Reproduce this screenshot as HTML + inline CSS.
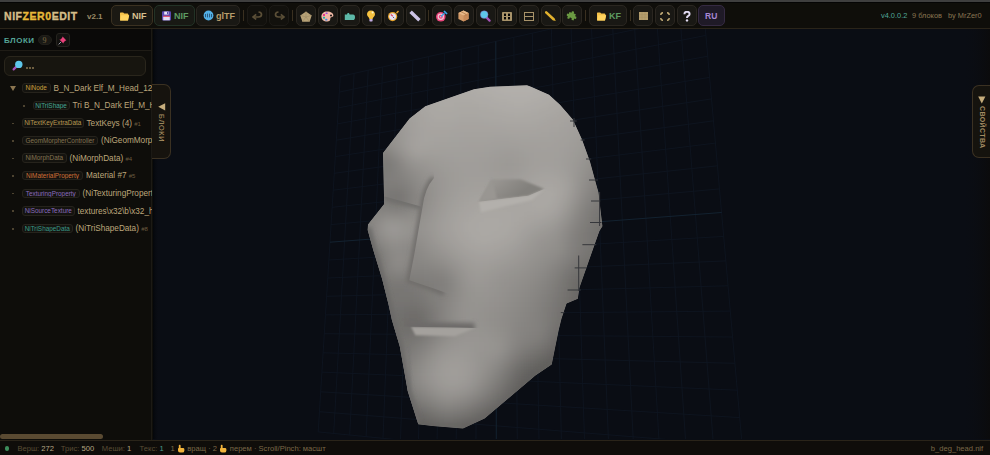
<!DOCTYPE html>
<html><head><meta charset="utf-8">
<style>
*{box-sizing:border-box;margin:0;padding:0}
html,body{width:990px;height:455px;overflow:hidden;background:#0f0e0a;font-family:"Liberation Sans",sans-serif;position:relative}
.a{position:absolute;white-space:nowrap}
#topbar{left:0;top:0;width:990px;height:2px;background:#3f3f3f}
#tb{left:0;top:2px;width:990px;height:27px;background:#0f0e0a;border-top:1px solid #050505;border-bottom:1px solid #2a2419}
.btn{position:absolute;top:5px;height:21px;border:1px solid #2a2620;border-radius:5px;background:#191814}
.sep{position:absolute;top:10px;width:1px;height:11px;background:#3a3020}
.bt{position:absolute;font-weight:bold;font-size:9px;top:6px}
#side{left:0;top:29px;width:152px;height:411px;background:#0e0d0a;border-right:1px solid #1c1a15}
#vp{left:153px;top:29px;width:837px;height:411px;background:#0a0d14;overflow:hidden}
#status{left:0;top:440px;width:990px;height:15px;background:#0f0d0a;border-top:1px solid #2a2419}
.row{position:absolute;left:0;height:17px;width:152px}
.bdg{height:9.5px;border-radius:3px;background:#14130f;border:1px solid #26231c;font-size:6.4px;line-height:8px;text-align:center;overflow:hidden}
.nm{font-size:8.2px;color:#bda77b;line-height:11px}
.hn{color:#6b5c40;font-size:6px}
.dot{position:absolute;width:2px;height:1px;background:#4a4030;top:9px}
</style></head><body>
<div class="a" id="topbar"></div>
<div class="a" id="tb">
  <div class="a" style="left:4px;top:7px;font-size:10.5px;font-weight:bold;letter-spacing:0.55px;color:#d5bd88;-webkit-text-stroke:0.35px #d5bd88">NIF<span style="color:#e8b93a;-webkit-text-stroke:0.35px #e8b93a">ZER0</span>EDIT</div>
  <div class="a" style="left:87px;top:9px;font-size:8px;font-weight:bold;color:#9a8a66">v2.1</div>
</div>
<div class="btn" style="left:111px;width:42px;border-color:#3b3121;background:#1b1913"></div>
<svg class="a" style="left:119px;top:12px" width="11" height="9" viewBox="0 0 11 9"><path d="M1 1.2 Q1 0.6 1.6 0.6 H4.2 L5.2 1.6 H8.6 Q9.2 1.6 9.2 2.2 V2.8 H10 L9 8.2 Q8.9 8.6 8.4 8.6 H1.6 Q1 8.6 1 8 Z" fill="#f5c24a"/><path d="M2.2 3.2 H10.2 L9 8.6 H1.2 Z" fill="#ffd460"/></svg>
<div class="bt" style="left:132px;top:11px;color:#d9c08f">NIF</div>
<div class="btn" style="left:154px;width:41px;border-color:#223226;background:#181914"></div>
<svg class="a" style="left:162px;top:11px" width="9" height="10" viewBox="0 0 9 10"><rect x="0" y="0.3" width="9" height="9.2" rx="1" fill="#5a4ab0"/><rect x="2.2" y="0.6" width="4.4" height="3" fill="#e8e4f4"/><rect x="5" y="1" width="1.2" height="2.2" fill="#5a4ab0"/><rect x="1.2" y="4.8" width="6.6" height="1.1" fill="#f04a5a"/><rect x="1.2" y="5.9" width="6.6" height="3.4" fill="#e4dcf2"/></svg>
<div class="bt" style="left:174px;top:11px;color:#5d9c62">NIF</div>
<div class="btn" style="left:196px;width:44px"></div>
<svg class="a" style="left:203px;top:10px" width="11" height="11" viewBox="0 0 11 11"><circle cx="5.5" cy="5.5" r="4.9" fill="#52b0e6"/><g fill="#2a5a80"><rect x="2" y="4" width="1" height="3.2"/><rect x="4" y="3.6" width="1" height="3.8"/><rect x="6" y="3.6" width="1" height="3.8"/><rect x="8" y="4" width="1" height="3.2"/></g></svg>
<div class="bt" style="left:216px;top:11px;color:#b89e6c">glTF</div>
<div class="sep" style="left:243px"></div>
<div class="btn" style="left:247px;width:20px;border-color:#1c1a16;background:#12110d"></div>
<svg class="a" style="left:252px;top:11px" width="11" height="9" viewBox="0 0 11 9"><path d="M6.5 1 Q9.5 1.3 9.5 3.6 Q9.5 6 6.5 6 H2" fill="none" stroke="#5b4f37" stroke-width="1.7"/><path d="M4.2 3.4 L1 6 L4.2 8.4" fill="none" stroke="#5b4f37" stroke-width="1.7"/></svg>
<div class="btn" style="left:269px;width:20px;border-color:#1c1a16;background:#12110d"></div>
<svg class="a" style="left:274px;top:11px" width="11" height="9" viewBox="0 0 11 9"><path d="M4.5 1 Q1.5 1.3 1.5 3.6 Q1.5 6 4.5 6 H9" fill="none" stroke="#5b4f37" stroke-width="1.7"/><path d="M6.8 3.4 L10 6 L6.8 8.4" fill="none" stroke="#5b4f37" stroke-width="1.7"/></svg>
<div class="sep" style="left:292px"></div>
<div class="btn" style="left:296px;width:20px"></div>
<svg class="a" style="left:300px;top:11px" width="12" height="11" viewBox="0 0 12 11"><path d="M6 0.4 L11.7 4.4 L9.6 10.8 H2.4 L0.3 4.4 Z" fill="#b7a277"/><path d="M6 0.4 L6 6 M11.7 4.4 L6 6 L9.6 10.8 M2.4 10.8 L6 6 L0.3 4.4" stroke="#9a8660" stroke-width="0.5" fill="none"/></svg>
<div class="btn" style="left:318px;width:20px"></div>
<svg class="a" style="left:321px;top:11px" width="13" height="11" viewBox="0 0 13 11"><path d="M6 0.4 C10 0.4 12.4 2.4 12.4 4.4 C12.4 6 10.4 5.6 9.6 6.6 C8.8 7.6 10.2 10.6 6.4 10.6 C2.4 10.6 0.4 8.2 0.4 5.4 C0.4 2.4 2.8 0.4 6 0.4 Z" fill="#f2b9a6"/><circle cx="10" cy="4.4" r="1" fill="#111"/><rect x="2" y="3" width="2" height="2" fill="#e83a8a"/><rect x="4.6" y="1.4" width="2" height="1.6" rx="0.6" fill="#9a4ae0"/><rect x="2" y="5.8" width="2" height="1.8" fill="#2ab0a0"/><rect x="4.2" y="7.8" width="2.2" height="1.8" rx="0.6" fill="#3a8ae8"/></svg>
<div class="btn" style="left:340px;width:20px"></div>
<svg class="a" style="left:344px;top:12px" width="12" height="9" viewBox="0 0 12 9"><path d="M0.8 2.4 H3 L3.6 1 H5 L5.6 2.4 H9 Q11 2.4 11 5.2 Q11 8 9 8 H0.8 Z" fill="#5db9a8"/></svg>
<div class="btn" style="left:362px;width:20px"></div>
<svg class="a" style="left:366px;top:10px" width="10" height="12" viewBox="0 0 10 12"><path d="M5 0.4 C7.8 0.4 9 2.4 9 4.2 C9 6.4 6.8 7.2 6.6 9 H3.4 C3.2 7.2 1 6.4 1 4.2 C1 2.4 2.2 0.4 5 0.4 Z" fill="#f6c240"/><circle cx="6.6" cy="2.6" r="1" fill="#fff6d0"/><rect x="3.4" y="9" width="3.2" height="2.4" rx="0.6" fill="#c3ace2"/></svg>
<div class="btn" style="left:384px;width:20px"></div>
<svg class="a" style="left:387px;top:10px" width="13" height="12" viewBox="0 0 13 12"><circle cx="5.6" cy="6.6" r="4.6" fill="#e9a62e"/><circle cx="5.6" cy="6.6" r="3.4" fill="#e6e2f2"/><path d="M9 2.4 L11 0.6 L12 1.6 L10.2 3.4 Z" fill="#e9a62e"/><path d="M3.8 4.6 L5.8 6.2 L4.8 5.2 Z" fill="#e04a6a" stroke="#e04a6a" stroke-width="1.2"/><path d="M6 7 L7.2 8" stroke="#555" stroke-width="1"/></svg>
<div class="btn" style="left:406px;width:20px"></div>
<svg class="a" style="left:409px;top:10px" width="12" height="12" viewBox="0 0 12 12"><path d="M0.4 3 L2.8 0.6 L11.6 9 L9.2 11.4 Z" fill="#cbc2e4"/></svg>
<div class="sep" style="left:428px"></div>
<div class="btn" style="left:432px;width:20px"></div>
<svg class="a" style="left:436px;top:10px" width="12" height="12" viewBox="0 0 12 12"><circle cx="4.8" cy="6.8" r="4.8" fill="#e8457a"/><circle cx="4.8" cy="6.8" r="3.2" fill="#f2c8d6"/><circle cx="4.8" cy="6.8" r="2" fill="#e8457a"/><circle cx="4.8" cy="6.8" r="0.8" fill="#f2c8d6"/><path d="M5 6.6 L8.4 3.2" stroke="#3aa6e8" stroke-width="1.4"/><path d="M7.4 1.6 L8.6 0.4 L11.6 3.4 L10.4 4.6 Z" fill="#3aa6e8"/></svg>
<div class="btn" style="left:454px;width:20px"></div>
<svg class="a" style="left:458px;top:10px" width="11" height="12" viewBox="0 0 11 12"><path d="M5.5 0.4 L10.6 3 V9 L5.5 11.6 L0.4 9 V3 Z" fill="#d69c68"/><path d="M0.4 3 L5.5 5.6 L10.6 3 L5.5 0.4 Z" fill="#e8b888"/><path d="M5.5 5.6 V11.6 L10.6 9 V3 Z" fill="#c88a58"/><path d="M3 1.7 L8 4.3 V6" stroke="#b07848" stroke-width="0.8" fill="none"/></svg>
<div class="btn" style="left:476px;width:20px"></div>
<svg class="a" style="left:480px;top:10px" width="11" height="12" viewBox="0 0 11 12"><path d="M6.4 7.4 L9.6 10.6" stroke="#a752b8" stroke-width="2.2" stroke-linecap="round"/><circle cx="4.2" cy="4.6" r="3.9" fill="#5ec6ea"/><circle cx="4.2" cy="4.6" r="3.9" fill="none" stroke="#8a4aa8" stroke-width="0.4"/></svg>
<div class="btn" style="left:497px;width:20px"></div>
<svg class="a" style="left:502px;top:12px" width="10" height="9" viewBox="0 0 10 9"><rect x="0" y="0" width="10" height="9" rx="0.8" fill="#a8936a"/><rect x="2" y="1.6" width="2" height="2.4" fill="#050505"/><rect x="6" y="1.6" width="2" height="2.4" fill="#050505"/><rect x="2" y="5" width="2" height="2.4" fill="#050505"/><rect x="6" y="5" width="2" height="2.4" fill="#050505"/></svg>
<div class="btn" style="left:519px;width:20px"></div>
<svg class="a" style="left:524px;top:12px" width="10" height="9" viewBox="0 0 10 9"><rect x="0.5" y="0.5" width="9" height="8" fill="none" stroke="#a8936a" stroke-width="1"/><path d="M0.5 4.5 H9.5" stroke="#a8936a" stroke-width="1"/></svg>
<div class="btn" style="left:541px;width:20px"></div>
<svg class="a" style="left:545px;top:11px" width="11" height="10" viewBox="0 0 11 10"><path d="M1.2 1.4 L8.6 8.2" stroke="#e1b12e" stroke-width="2.6" stroke-linecap="round"/><path d="M8 7.6 L10.4 9.6" stroke="#e1b12e" stroke-width="1.2"/></svg>
<div class="btn" style="left:562px;width:20px"></div>
<svg class="a" style="left:566px;top:10px" width="12" height="12" viewBox="0 0 12 12"><g transform="rotate(20 6 6)"><path d="M2.2 3 H4.4 Q4 1.2 5.6 1.2 Q7.2 1.2 6.8 3 H9 V5.2 Q10.8 4.8 10.8 6.4 Q10.8 8 9 7.6 V9.8 H6.8 Q7.2 8 5.6 8 Q4 8 4.4 9.8 H2.2 V7.6 Q0.6 8 0.6 6.4 Q0.6 4.8 2.2 5.2 Z" fill="#6a9a42"/></g></svg>
<div class="sep" style="left:585px"></div>
<div class="btn" style="left:589px;width:38px"></div>
<svg class="a" style="left:596px;top:12px" width="11" height="9" viewBox="0 0 11 9"><path d="M1 1.2 Q1 0.6 1.6 0.6 H4.2 L5.2 1.6 H8.6 Q9.2 1.6 9.2 2.2 V2.8 H10 L9 8.2 Q8.9 8.6 8.4 8.6 H1.6 Q1 8.6 1 8 Z" fill="#f5c24a"/><path d="M2.2 3.2 H10.2 L9 8.6 H1.2 Z" fill="#ffd460"/></svg>
<div class="bt" style="left:609px;top:11px;color:#5d9c62">KF</div>
<div class="sep" style="left:630px"></div>
<div class="btn" style="left:633px;width:20px"></div>
<svg class="a" style="left:639px;top:12px" width="9" height="8" viewBox="0 0 9 8"><rect x="0" y="0" width="9" height="8" fill="#b59e6e"/><path d="M3 0 V8 M6 0 V8 M0 2.7 H9 M0 5.3 H9" stroke="#a08a5e" stroke-width="0.4"/></svg>
<div class="btn" style="left:655px;width:20px"></div>
<svg class="a" style="left:660px;top:12px" width="10" height="9" viewBox="0 0 10 9"><path d="M0.8 3 Q0.8 0.8 3 0.8 M7 0.8 Q9.2 0.8 9.2 3 M9.2 6 Q9.2 8.2 7 8.2 M3 8.2 Q0.8 8.2 0.8 6" stroke="#c8b07a" stroke-width="1.4" fill="none"/></svg>
<div class="btn" style="left:677px;width:20px"></div>
<svg class="a" style="left:683px;top:11px" width="8" height="11" viewBox="0 0 8 11"><path d="M1.4 3.2 Q1.4 0.8 4 0.8 Q6.6 0.8 6.6 3 Q6.6 4.4 5 5.2 Q4 5.8 4 7" stroke="#e2dbf2" stroke-width="2" fill="none"/><circle cx="4" cy="9.4" r="1.2" fill="#e2dbf2"/></svg>
<div class="btn" style="left:698px;width:27px;background:#1f1a27;border-color:#352a42"></div>
<div class="bt" style="left:705px;top:11px;color:#a687d4;font-size:8.5px">RU</div>
<div class="a" style="left:881px;top:11px;font-size:7.4px;color:#4fa69a">v4.0.0.2</div>
<div class="a" style="left:912px;top:11px;font-size:7.4px;color:#8a7652">9 блоков</div>
<div class="a" style="left:948px;top:11px;font-size:7.4px;color:#8a7652">by MrZer0</div>
<div class="a" id="side"></div>
<div class="a" style="left:0;top:29px;width:151px;height:21px;background:#0a0908"></div>
<div class="a" style="left:4px;top:36px;font-size:8px;font-weight:bold;letter-spacing:0.5px;color:#56a598">БЛОКИ</div>
<div class="a" style="left:38px;top:34.5px;width:14px;height:10.5px;border-radius:5px;background:#1a1915;border:1px solid #211f1a"></div>
<div class="a" style="left:42.5px;top:35.5px;font-size:8px;font-family:'Liberation Serif',serif;color:#7e6a44">9</div>
<div class="a" style="left:56px;top:33px;width:14px;height:14px;border-radius:3px;background:#131210;border:1px solid #25231e"></div>
<svg class="a" style="left:58px;top:36px" width="9" height="9" viewBox="0 0 9 9"><path d="M4.6 0.6 L8.4 4.4 L7.2 4.8 L5.6 6.4 L5.4 7.6 L1.4 3.6 L2.6 3.4 L4.2 1.8 Z" fill="#e8407a"/><path d="M3 6 L0.6 8.4" stroke="#9a9aa8" stroke-width="1"/></svg>
<div class="a" style="left:0;top:50px;width:152px;height:1px;background:#1f1c16"></div>
<div class="a" style="left:4px;top:56px;width:142px;height:20px;border-radius:6px;background:#17150f;border:1px solid #2a261c"></div>
<svg class="a" style="left:12px;top:60px" width="11" height="11" viewBox="0 0 11 11"><path d="M5 6 L1.6 9.4" stroke="#a550b8" stroke-width="2.2" stroke-linecap="round"/><circle cx="6.8" cy="4.4" r="3.7" fill="#5ec6ea"/></svg>
<div class="a" style="left:26px;top:67px;width:8px;height:2px;background:repeating-linear-gradient(90deg,#6e5e40 0 1.6px,transparent 1.6px 3px)"></div>
<div class="a" style="left:0;top:80px;width:152px;height:160px;overflow:hidden">
<svg class="a" style="left:10px;top:5.5px" width="6" height="5" viewBox="0 0 6 5"><path d="M0 0 H6 L3 5 Z" fill="#8a7550"/></svg>
<div class="a bdg" style="left:22px;top:3.3px;width:28.5px;color:#c9a03e">NiNode</div>
<div class="a nm" style="left:53.5px;top:2.7px">B_N_Dark Elf_M_Head_12 <span class=hn>#0</span></div>
<div class="a" style="left:23.0px;top:25.0px;width:1.5px;height:1.5px;background:#4d4330"></div>
<div class="a bdg" style="left:32.5px;top:20.8px;width:37px;color:#45a693">NiTriShape</div>
<div class="a nm" style="left:72.5px;top:20.2px">Tri B_N_Dark Elf_M_Head</div>
<div class="a" style="left:12.0px;top:42.5px;width:1.5px;height:1.5px;background:#4d4330"></div>
<div class="a bdg" style="left:22px;top:38.3px;width:61.5px;color:#b89a52">NiTextKeyExtraData</div>
<div class="a nm" style="left:86.5px;top:37.7px">TextKeys (4) <span class=hn>#1</span></div>
<div class="a" style="left:12.0px;top:60.0px;width:1.5px;height:1.5px;background:#4d4330"></div>
<div class="a bdg" style="left:22px;top:55.8px;width:76px;color:#857352">GeomMorpherController</div>
<div class="a nm" style="left:101px;top:55.2px">(NiGeomMorpherController)</div>
<div class="a" style="left:12.0px;top:77.5px;width:1.5px;height:1.5px;background:#4d4330"></div>
<div class="a bdg" style="left:22px;top:73.3px;width:44.5px;color:#857352">NiMorphData</div>
<div class="a nm" style="left:69.5px;top:72.7px">(NiMorphData) <span class=hn>#4</span></div>
<div class="a" style="left:12.0px;top:95.1px;width:1.5px;height:1.5px;background:#4d4330"></div>
<div class="a bdg" style="left:22px;top:90.9px;width:61px;color:#cf6f38">NiMaterialProperty</div>
<div class="a nm" style="left:86px;top:90.3px">Material #7 <span class=hn>#5</span></div>
<div class="a" style="left:12.0px;top:112.7px;width:1.5px;height:1.5px;background:#4d4330"></div>
<div class="a bdg" style="left:22px;top:108.5px;width:57.5px;color:#8a6bbf">TexturingProperty</div>
<div class="a nm" style="left:82.5px;top:107.9px">(NiTexturingProperty)</div>
<div class="a" style="left:12.0px;top:130.3px;width:1.5px;height:1.5px;background:#4d4330"></div>
<div class="a bdg" style="left:22px;top:126.1px;width:52.5px;color:#8a6bbf">NiSourceTexture</div>
<div class="a nm" style="left:77.5px;top:125.5px">textures\x32\b\x32_head.dds</div>
<div class="a" style="left:12.0px;top:148.0px;width:1.5px;height:1.5px;background:#4d4330"></div>
<div class="a bdg" style="left:22px;top:143.8px;width:50.5px;color:#3a9a88">NiTriShapeData</div>
<div class="a nm" style="left:75.5px;top:143.2px">(NiTriShapeData) <span class=hn>#8</span></div>
</div><div class="a" id="vp"></div>
<svg class="a" style="left:0;top:0" width="990" height="455" viewBox="0 0 990 455">
<defs><clipPath id="fc"><polygon points="383,153 409.6,118.4 425.3,106.3 474,89.2 490,86.7 527,85.2 531,86.7 549,94.7 560,104.8 572.8,119.6 582,139.4 590,161.8 596.5,185.5 598.4,192.3 602.4,226.2 599.4,230.9 579.3,288 577.8,298.7 566.5,303.5 561.5,318.5 558.5,330.8 551.7,364.6 535.4,375.4 484.6,418.5 463,428.5 432.8,426 418.3,424.2 407.7,391 406.4,383.3 399.8,346.4 391.9,320 388.6,304.7 382,278.4 373.2,249.8 367.7,230 368,224.6 384.2,204"/></clipPath>
<filter id="bl3" filterUnits="userSpaceOnUse" x="150" y="28" width="840" height="412"><feGaussianBlur stdDeviation="3"/></filter>
<filter id="bl1" filterUnits="userSpaceOnUse" x="150" y="28" width="840" height="412"><feGaussianBlur stdDeviation="1.2"/></filter>
<filter id="bl2" filterUnits="userSpaceOnUse" x="150" y="28" width="840" height="412"><feGaussianBlur stdDeviation="2"/></filter>
<clipPath id="vpc"><rect x="153" y="29" width="837" height="410"/></clipPath>
<linearGradient id="lsh" x1="0" x2="1"><stop offset="0" stop-color="#04060a"/><stop offset="1" stop-color="#0a0d14" stop-opacity="0"/></linearGradient>
<linearGradient id="rsh" x1="0" x2="1"><stop offset="0" stop-color="#0a0d14" stop-opacity="0"/><stop offset="1" stop-color="#0b0b0c"/></linearGradient>
</defs>
<g clip-path="url(#vpc)">
<rect x="153" y="29" width="837" height="410" fill="#0a0d14"/>
<rect x="153" y="29" width="6" height="410" fill="url(#lsh)"/>
<rect x="962" y="29" width="28" height="410" fill="url(#rsh)"/>
<path d="M340.3 76.5L318.2 431.9M340.3 76.5L702.3 -5.2M354.1 73.4L333.7 433.4M339.3 92.1L704.1 14.9M368.2 70.2L349.7 435.0M338.3 107.9L705.9 35.4M382.7 66.9L366.1 436.6M337.3 123.9L707.8 56.2M397.6 63.5L383.0 438.3M336.3 140.2L709.6 77.3M412.9 60.1L400.5 440.0M335.3 156.6L711.5 98.9M428.6 56.6L418.4 441.8M334.3 173.3L713.5 120.8M444.7 52.9L437.0 443.6M333.2 190.2L715.4 143.1M461.3 49.2L456.1 445.5M332.2 207.3L717.5 165.8M478.3 45.4L475.9 447.5M331.1 224.6L719.5 188.9M513.8 37.4L517.4 451.6M328.9 260.0L723.7 236.4M532.3 33.2L539.2 453.7M327.8 278.0L725.9 260.9M551.4 28.9L561.8 456.0M326.6 296.3L728.1 285.8M571.0 24.5L585.1 458.3M325.5 314.9L730.3 311.1M591.2 19.9L609.3 460.7M324.3 333.7L732.6 337.0M612.1 15.2L634.4 463.2M323.1 352.8L734.9 363.3M633.6 10.3L660.5 465.7M321.9 372.1L737.3 390.2M655.8 5.3L687.5 468.4M320.7 391.8L739.7 417.6M678.7 0.2L715.5 471.2M319.4 411.7L742.2 445.5M702.3 -5.2L744.7 474.1M318.2 431.9L744.7 474.1" stroke="#0e1520" stroke-width="0.9" fill="none"/><path d="M495.8 41.4L496.3 449.5M330.0 242.2L721.6 212.5" stroke="#132230" stroke-width="1" fill="none"/>
<g clip-path="url(#fc)">
<polygon points="383,153 409.6,118.4 425.3,106.3 474,89.2 490,86.7 527,85.2 531,86.7 549,94.7 560,104.8 572.8,119.6 582,139.4 590,161.8 596.5,185.5 598.4,192.3 602.4,226.2 599.4,230.9 579.3,288 577.8,298.7 566.5,303.5 561.5,318.5 558.5,330.8 551.7,364.6 535.4,375.4 484.6,418.5 463,428.5 432.8,426 418.3,424.2 407.7,391 406.4,383.3 399.8,346.4 391.9,320 388.6,304.7 382,278.4 373.2,249.8 367.7,230 368,224.6 384.2,204" fill="#9a9793"/>
<g filter="url(#bl3)"><path fill="#b0ada9" d="M469 82h5v5h-5zM474 82h5v5h-5zM484 87h5v5h-5zM544 87h5v5h-5zM494 92h5v5h-5zM499 92h5v5h-5zM534 92h5v5h-5zM509 97h5v5h-5zM514 97h5v5h-5zM519 97h5v5h-5zM524 97h5v5h-5z"/><path fill="#b1aeaa" d="M479 82h5v5h-5zM484 82h5v5h-5zM494 87h5v5h-5zM534 87h5v5h-5zM539 87h5v5h-5zM504 92h5v5h-5zM509 92h5v5h-5zM514 92h5v5h-5zM519 92h5v5h-5zM524 92h5v5h-5zM529 92h5v5h-5z"/><path fill="#b2afab" d="M489 82h5v5h-5zM494 82h5v5h-5zM504 87h5v5h-5zM509 87h5v5h-5zM514 87h5v5h-5zM519 87h5v5h-5zM524 87h5v5h-5zM529 87h5v5h-5z"/><path fill="#b3b0ac" d="M499 82h5v5h-5zM504 82h5v5h-5zM509 82h5v5h-5zM524 82h5v5h-5zM529 82h5v5h-5z"/><path fill="#b4b1ac" d="M514 82h5v5h-5zM519 82h5v5h-5z"/><path fill="#b3afab" d="M534 82h5v5h-5z"/><path fill="#aeaba7" d="M454 87h5v5h-5zM459 87h5v5h-5zM474 92h5v5h-5zM479 92h5v5h-5zM549 92h5v5h-5zM489 97h5v5h-5zM539 97h5v5h-5zM499 102h5v5h-5zM504 102h5v5h-5zM509 102h5v5h-5zM524 102h5v5h-5zM529 102h5v5h-5z"/><path fill="#aeaca8" d="M464 87h5v5h-5z"/><path fill="#afaca8" d="M469 87h5v5h-5zM474 87h5v5h-5zM549 87h5v5h-5zM484 92h5v5h-5zM489 92h5v5h-5zM539 92h5v5h-5zM544 92h5v5h-5zM494 97h5v5h-5zM499 97h5v5h-5zM504 97h5v5h-5zM529 97h5v5h-5zM534 97h5v5h-5zM514 102h5v5h-5zM519 102h5v5h-5z"/><path fill="#b0ada8" d="M479 87h5v5h-5z"/><path fill="#b1aea9" d="M489 87h5v5h-5z"/><path fill="#b2afaa" d="M499 87h5v5h-5z"/><path fill="#adaaa6" d="M439 92h5v5h-5zM444 92h5v5h-5zM449 92h5v5h-5zM454 92h5v5h-5zM459 92h5v5h-5zM464 92h5v5h-5zM469 92h5v5h-5zM554 92h5v5h-5zM474 97h5v5h-5zM479 97h5v5h-5zM544 97h5v5h-5zM549 97h5v5h-5zM489 102h5v5h-5zM494 102h5v5h-5zM534 102h5v5h-5zM539 102h5v5h-5zM504 107h5v5h-5zM509 107h5v5h-5zM514 107h5v5h-5zM519 107h5v5h-5zM524 107h5v5h-5z"/><path fill="#aba8a4" d="M429 97h5v5h-5zM559 97h5v5h-5zM434 102h5v5h-5zM454 102h5v5h-5zM459 102h5v5h-5zM464 102h5v5h-5zM469 102h5v5h-5zM474 102h5v5h-5zM549 102h5v5h-5zM439 107h5v5h-5zM444 107h5v5h-5zM449 107h5v5h-5zM479 107h5v5h-5zM484 107h5v5h-5zM539 107h5v5h-5zM544 107h5v5h-5zM499 112h5v5h-5zM504 112h5v5h-5zM524 112h5v5h-5zM529 112h5v5h-5zM484 217h5v5h-5zM489 217h5v5h-5zM494 217h5v5h-5zM479 222h5v5h-5zM484 222h5v5h-5zM489 222h5v5h-5zM494 222h5v5h-5zM479 227h5v5h-5zM484 227h5v5h-5zM489 227h5v5h-5zM494 227h5v5h-5zM479 232h5v5h-5zM484 232h5v5h-5z"/><path fill="#aca9a5" d="M434 97h5v5h-5zM439 97h5v5h-5zM444 97h5v5h-5zM449 97h5v5h-5zM454 97h5v5h-5zM459 97h5v5h-5zM464 97h5v5h-5zM469 97h5v5h-5zM554 97h5v5h-5zM444 102h5v5h-5zM449 102h5v5h-5zM479 102h5v5h-5zM484 102h5v5h-5zM544 102h5v5h-5zM494 107h5v5h-5zM499 107h5v5h-5zM534 107h5v5h-5zM514 112h5v5h-5z"/><path fill="#adaaa7" d="M484 97h5v5h-5z"/><path fill="#a8a5a1" d="M419 102h5v5h-5zM424 112h5v5h-5zM554 112h5v5h-5zM459 117h5v5h-5zM464 117h5v5h-5zM469 117h5v5h-5zM474 117h5v5h-5zM544 117h5v5h-5zM429 122h5v5h-5zM434 122h5v5h-5zM439 122h5v5h-5zM444 122h5v5h-5zM494 122h5v5h-5zM499 122h5v5h-5zM504 122h5v5h-5zM509 122h5v5h-5zM529 122h5v5h-5zM534 122h5v5h-5zM539 182h5v5h-5zM544 182h5v5h-5zM549 182h5v5h-5zM554 187h5v5h-5zM524 192h5v5h-5zM554 192h5v5h-5zM519 197h5v5h-5zM489 202h5v5h-5zM494 202h5v5h-5zM499 202h5v5h-5zM504 202h5v5h-5zM509 202h5v5h-5zM474 207h5v5h-5zM544 207h5v5h-5zM524 212h5v5h-5zM529 212h5v5h-5zM464 217h5v5h-5zM519 217h5v5h-5zM514 222h5v5h-5zM464 232h5v5h-5zM499 237h5v5h-5zM474 242h5v5h-5zM479 242h5v5h-5zM484 242h5v5h-5zM489 242h5v5h-5z"/><path fill="#a9a6a3" d="M424 102h5v5h-5zM499 117h5v5h-5zM544 187h5v5h-5zM534 192h5v5h-5zM549 197h5v5h-5zM529 202h5v5h-5zM509 212h5v5h-5zM509 217h5v5h-5zM469 232h5v5h-5zM474 237h5v5h-5zM489 237h5v5h-5z"/><path fill="#aaa7a4" d="M429 102h5v5h-5zM554 102h5v5h-5zM479 217h5v5h-5zM499 217h5v5h-5zM474 222h5v5h-5z"/><path fill="#aba9a5" d="M439 102h5v5h-5zM519 112h5v5h-5z"/><path fill="#aaa7a3" d="M559 102h5v5h-5zM429 107h5v5h-5zM459 107h5v5h-5zM464 107h5v5h-5zM469 107h5v5h-5zM474 107h5v5h-5zM549 107h5v5h-5zM434 112h5v5h-5zM439 112h5v5h-5zM444 112h5v5h-5zM449 112h5v5h-5zM484 112h5v5h-5zM489 112h5v5h-5zM539 112h5v5h-5zM504 117h5v5h-5zM509 117h5v5h-5zM514 117h5v5h-5zM519 117h5v5h-5zM524 117h5v5h-5zM539 192h5v5h-5zM544 192h5v5h-5zM549 192h5v5h-5zM534 197h5v5h-5zM539 197h5v5h-5zM544 197h5v5h-5zM534 202h5v5h-5zM539 202h5v5h-5zM479 212h5v5h-5zM484 212h5v5h-5zM489 212h5v5h-5zM494 212h5v5h-5zM499 212h5v5h-5zM504 212h5v5h-5zM474 217h5v5h-5zM504 217h5v5h-5zM469 222h5v5h-5zM504 222h5v5h-5zM469 227h5v5h-5zM499 227h5v5h-5zM474 232h5v5h-5zM494 232h5v5h-5zM479 237h5v5h-5zM484 237h5v5h-5z"/><path fill="#a9a6a2" d="M564 102h5v5h-5zM424 107h5v5h-5zM554 107h5v5h-5zM429 112h5v5h-5zM459 112h5v5h-5zM464 112h5v5h-5zM469 112h5v5h-5zM474 112h5v5h-5zM544 112h5v5h-5zM434 117h5v5h-5zM439 117h5v5h-5zM444 117h5v5h-5zM449 117h5v5h-5zM489 117h5v5h-5zM494 117h5v5h-5zM534 117h5v5h-5zM539 187h5v5h-5zM549 187h5v5h-5zM524 197h5v5h-5zM529 197h5v5h-5zM519 202h5v5h-5zM524 202h5v5h-5zM484 207h5v5h-5zM489 207h5v5h-5zM494 207h5v5h-5zM499 207h5v5h-5zM504 207h5v5h-5zM509 207h5v5h-5zM514 207h5v5h-5zM519 207h5v5h-5zM524 207h5v5h-5zM529 207h5v5h-5zM534 207h5v5h-5zM539 207h5v5h-5zM474 212h5v5h-5zM514 212h5v5h-5zM519 212h5v5h-5zM469 217h5v5h-5zM514 217h5v5h-5zM464 222h5v5h-5zM509 222h5v5h-5zM464 227h5v5h-5zM504 232h5v5h-5zM494 237h5v5h-5z"/><path fill="#a4a19d" d="M409 107h5v5h-5zM414 122h5v5h-5zM414 127h5v5h-5zM559 127h5v5h-5zM414 132h5v5h-5zM554 132h5v5h-5zM414 137h5v5h-5zM464 137h5v5h-5zM469 137h5v5h-5zM474 137h5v5h-5zM479 137h5v5h-5zM484 137h5v5h-5zM514 137h5v5h-5zM519 137h5v5h-5zM524 137h5v5h-5zM529 137h5v5h-5zM534 137h5v5h-5zM539 137h5v5h-5zM544 137h5v5h-5zM439 142h5v5h-5zM444 142h5v5h-5zM414 147h5v5h-5zM419 147h5v5h-5zM534 172h5v5h-5zM554 172h5v5h-5zM559 177h5v5h-5zM519 182h5v5h-5zM509 187h5v5h-5zM474 192h5v5h-5zM464 197h5v5h-5zM459 202h5v5h-5zM449 222h5v5h-5zM529 222h5v5h-5zM449 227h5v5h-5zM454 237h5v5h-5zM514 237h5v5h-5zM459 242h5v5h-5zM464 247h5v5h-5zM499 247h5v5h-5zM474 252h5v5h-5zM489 252h5v5h-5z"/><path fill="#a6a39f" d="M414 107h5v5h-5zM419 117h5v5h-5zM559 117h5v5h-5zM419 122h5v5h-5zM549 122h5v5h-5zM554 122h5v5h-5zM459 127h5v5h-5zM464 127h5v5h-5zM469 127h5v5h-5zM474 127h5v5h-5zM479 127h5v5h-5zM484 127h5v5h-5zM489 127h5v5h-5zM539 127h5v5h-5zM544 127h5v5h-5zM424 132h5v5h-5zM429 132h5v5h-5zM434 132h5v5h-5zM439 132h5v5h-5zM444 132h5v5h-5zM424 137h5v5h-5zM539 177h5v5h-5zM554 177h5v5h-5zM529 182h5v5h-5zM514 192h5v5h-5zM559 192h5v5h-5zM479 197h5v5h-5zM484 197h5v5h-5zM469 202h5v5h-5zM554 202h5v5h-5zM459 212h5v5h-5zM544 212h5v5h-5zM529 217h5v5h-5zM454 222h5v5h-5zM454 227h5v5h-5zM459 237h5v5h-5zM509 237h5v5h-5zM464 242h5v5h-5zM474 247h5v5h-5zM489 247h5v5h-5z"/><path fill="#a7a5a1" d="M419 107h5v5h-5zM564 107h5v5h-5zM424 117h5v5h-5zM449 122h5v5h-5zM489 122h5v5h-5zM514 197h5v5h-5zM554 197h5v5h-5zM484 202h5v5h-5z"/><path fill="#aaa8a4" d="M434 107h5v5h-5zM454 107h5v5h-5zM494 112h5v5h-5zM534 112h5v5h-5zM499 222h5v5h-5zM474 227h5v5h-5zM489 232h5v5h-5z"/><path fill="#aba8a5" d="M489 107h5v5h-5zM509 112h5v5h-5z"/><path fill="#aca9a6" d="M529 107h5v5h-5z"/><path fill="#a8a5a2" d="M559 107h5v5h-5zM429 117h5v5h-5zM479 117h5v5h-5zM514 122h5v5h-5zM519 122h5v5h-5zM524 122h5v5h-5zM534 187h5v5h-5zM514 202h5v5h-5zM469 212h5v5h-5zM509 227h5v5h-5z"/><path fill="#a6a4a0" d="M569 107h5v5h-5zM449 127h5v5h-5zM504 127h5v5h-5zM534 127h5v5h-5zM544 177h5v5h-5zM499 197h5v5h-5zM479 247h5v5h-5z"/><path fill="#a19e9b" d="M404 112h5v5h-5zM574 127h5v5h-5zM409 132h5v5h-5zM489 147h5v5h-5zM559 147h5v5h-5zM444 152h5v5h-5zM449 152h5v5h-5zM474 152h5v5h-5zM529 152h5v5h-5zM554 157h5v5h-5zM559 167h5v5h-5zM454 197h5v5h-5zM539 222h5v5h-5zM444 232h5v5h-5zM524 232h5v5h-5zM509 247h5v5h-5zM489 257h5v5h-5z"/><path fill="#a3a09d" d="M409 112h5v5h-5zM569 122h5v5h-5zM564 127h5v5h-5zM559 132h5v5h-5zM494 137h5v5h-5zM499 137h5v5h-5zM504 137h5v5h-5zM459 142h5v5h-5zM464 142h5v5h-5zM539 167h5v5h-5zM549 167h5v5h-5zM524 177h5v5h-5zM484 187h5v5h-5zM499 187h5v5h-5zM504 187h5v5h-5zM524 227h5v5h-5zM449 232h5v5h-5zM519 232h5v5h-5z"/><path fill="#a5a29e" d="M414 112h5v5h-5zM564 117h5v5h-5zM559 122h5v5h-5zM554 127h5v5h-5zM464 132h5v5h-5zM469 132h5v5h-5zM474 132h5v5h-5zM479 132h5v5h-5zM484 132h5v5h-5zM489 132h5v5h-5zM494 132h5v5h-5zM499 132h5v5h-5zM504 132h5v5h-5zM509 132h5v5h-5zM539 132h5v5h-5zM544 132h5v5h-5zM439 137h5v5h-5zM444 137h5v5h-5zM419 142h5v5h-5zM424 142h5v5h-5zM429 142h5v5h-5zM539 172h5v5h-5zM544 172h5v5h-5zM549 172h5v5h-5zM524 182h5v5h-5zM484 192h5v5h-5zM489 192h5v5h-5zM494 192h5v5h-5zM499 192h5v5h-5zM504 192h5v5h-5zM469 197h5v5h-5zM464 202h5v5h-5zM459 207h5v5h-5zM519 227h5v5h-5zM454 232h5v5h-5zM504 242h5v5h-5zM494 247h5v5h-5z"/><path fill="#a7a4a0" d="M419 112h5v5h-5zM559 112h5v5h-5zM554 117h5v5h-5zM424 122h5v5h-5zM459 122h5v5h-5zM464 122h5v5h-5zM469 122h5v5h-5zM474 122h5v5h-5zM479 122h5v5h-5zM544 122h5v5h-5zM429 127h5v5h-5zM434 127h5v5h-5zM439 127h5v5h-5zM444 127h5v5h-5zM509 127h5v5h-5zM514 127h5v5h-5zM519 127h5v5h-5zM524 127h5v5h-5zM529 127h5v5h-5zM534 182h5v5h-5zM554 182h5v5h-5zM519 192h5v5h-5zM504 197h5v5h-5zM509 197h5v5h-5zM474 202h5v5h-5zM479 202h5v5h-5zM469 207h5v5h-5zM549 207h5v5h-5zM539 212h5v5h-5zM459 217h5v5h-5zM524 217h5v5h-5zM519 222h5v5h-5zM514 227h5v5h-5zM459 232h5v5h-5zM504 237h5v5h-5zM469 242h5v5h-5zM494 242h5v5h-5z"/><path fill="#a9a7a3" d="M454 112h5v5h-5zM479 112h5v5h-5zM529 117h5v5h-5zM544 202h5v5h-5zM504 227h5v5h-5zM499 232h5v5h-5z"/><path fill="#a8a6a2" d="M549 112h5v5h-5zM454 117h5v5h-5zM484 117h5v5h-5zM539 117h5v5h-5zM529 192h5v5h-5zM549 202h5v5h-5zM479 207h5v5h-5zM469 237h5v5h-5z"/><path fill="#a6a3a0" d="M564 112h5v5h-5zM424 127h5v5h-5zM454 127h5v5h-5zM494 127h5v5h-5zM499 127h5v5h-5zM549 177h5v5h-5zM524 187h5v5h-5zM559 187h5v5h-5zM489 197h5v5h-5zM494 197h5v5h-5zM464 207h5v5h-5zM499 242h5v5h-5zM484 247h5v5h-5z"/><path fill="#a5a29f" d="M569 112h5v5h-5zM419 127h5v5h-5zM549 127h5v5h-5zM419 132h5v5h-5zM454 132h5v5h-5zM459 132h5v5h-5zM514 132h5v5h-5zM529 132h5v5h-5zM534 132h5v5h-5zM419 137h5v5h-5zM434 137h5v5h-5zM519 187h5v5h-5zM454 217h5v5h-5zM534 217h5v5h-5zM524 222h5v5h-5zM469 247h5v5h-5z"/><path fill="#9e9b97" d="M399 117h5v5h-5zM579 137h5v5h-5zM429 157h5v5h-5zM514 157h5v5h-5zM494 162h5v5h-5zM494 167h5v5h-5zM514 167h5v5h-5zM449 172h5v5h-5zM569 177h5v5h-5zM569 187h5v5h-5zM554 217h5v5h-5zM539 227h5v5h-5zM444 242h5v5h-5zM504 257h5v5h-5zM494 262h5v5h-5zM474 267h5v5h-5zM484 267h5v5h-5zM454 357h5v5h-5zM444 362h5v5h-5z"/><path fill="#a09d9a" d="M404 117h5v5h-5zM574 132h5v5h-5zM499 147h5v5h-5zM514 147h5v5h-5zM564 147h5v5h-5zM449 157h5v5h-5zM479 157h5v5h-5zM459 162h5v5h-5zM464 162h5v5h-5zM469 162h5v5h-5zM474 162h5v5h-5zM464 167h5v5h-5zM469 167h5v5h-5zM474 167h5v5h-5zM464 172h5v5h-5zM469 172h5v5h-5zM474 172h5v5h-5zM479 172h5v5h-5zM519 172h5v5h-5zM489 177h5v5h-5zM509 177h5v5h-5zM459 182h5v5h-5zM454 192h5v5h-5zM559 207h5v5h-5zM449 242h5v5h-5zM504 252h5v5h-5zM494 257h5v5h-5zM479 262h5v5h-5z"/><path fill="#a2a09c" d="M409 117h5v5h-5zM564 132h5v5h-5zM559 137h5v5h-5zM484 142h5v5h-5zM519 142h5v5h-5zM439 147h5v5h-5zM444 147h5v5h-5zM449 147h5v5h-5zM454 147h5v5h-5zM459 147h5v5h-5zM539 147h5v5h-5zM544 147h5v5h-5zM544 162h5v5h-5zM554 167h5v5h-5zM559 172h5v5h-5zM564 182h5v5h-5zM469 187h5v5h-5zM454 202h5v5h-5zM559 202h5v5h-5zM534 222h5v5h-5z"/><path fill="#a4a29e" d="M414 117h5v5h-5zM449 137h5v5h-5zM454 137h5v5h-5zM514 187h5v5h-5zM479 192h5v5h-5zM454 212h5v5h-5z"/><path fill="#a7a4a1" d="M549 117h5v5h-5zM454 122h5v5h-5zM484 122h5v5h-5zM539 122h5v5h-5zM529 187h5v5h-5zM464 212h5v5h-5zM534 212h5v5h-5zM459 222h5v5h-5zM459 227h5v5h-5zM509 232h5v5h-5zM464 237h5v5h-5z"/><path fill="#a4a19e" d="M569 117h5v5h-5zM564 122h5v5h-5zM549 132h5v5h-5zM459 137h5v5h-5zM414 142h5v5h-5zM434 142h5v5h-5zM529 177h5v5h-5zM559 197h5v5h-5zM554 207h5v5h-5zM549 212h5v5h-5zM539 217h5v5h-5zM479 252h5v5h-5zM484 252h5v5h-5z"/><path fill="#a3a09c" d="M574 117h5v5h-5zM554 137h5v5h-5zM469 142h5v5h-5zM474 142h5v5h-5zM479 142h5v5h-5zM524 142h5v5h-5zM529 142h5v5h-5zM534 142h5v5h-5zM539 142h5v5h-5zM544 142h5v5h-5zM549 142h5v5h-5zM429 147h5v5h-5zM434 147h5v5h-5zM534 167h5v5h-5zM529 172h5v5h-5zM514 182h5v5h-5zM474 187h5v5h-5zM479 187h5v5h-5zM489 187h5v5h-5zM494 187h5v5h-5zM564 187h5v5h-5zM464 192h5v5h-5zM459 197h5v5h-5zM449 212h5v5h-5zM544 217h5v5h-5zM504 247h5v5h-5zM469 252h5v5h-5zM494 252h5v5h-5z"/><path fill="#9d9a96" d="M399 122h5v5h-5zM579 142h5v5h-5zM424 157h5v5h-5zM504 157h5v5h-5zM499 162h5v5h-5zM504 167h5v5h-5zM439 207h5v5h-5zM524 242h5v5h-5zM464 262h5v5h-5zM469 267h5v5h-5zM439 377h5v5h-5zM444 382h5v5h-5z"/><path fill="#9f9d99" d="M404 122h5v5h-5zM519 152h5v5h-5zM564 167h5v5h-5zM459 172h5v5h-5zM454 187h5v5h-5zM449 197h5v5h-5zM444 207h5v5h-5zM544 222h5v5h-5zM534 227h5v5h-5z"/><path fill="#a29f9b" d="M409 122h5v5h-5zM574 122h5v5h-5zM409 137h5v5h-5zM564 137h5v5h-5zM409 142h5v5h-5zM494 142h5v5h-5zM509 142h5v5h-5zM514 142h5v5h-5zM559 142h5v5h-5zM474 147h5v5h-5zM479 147h5v5h-5zM529 147h5v5h-5zM554 147h5v5h-5zM534 152h5v5h-5zM539 152h5v5h-5zM544 152h5v5h-5zM549 152h5v5h-5zM539 157h5v5h-5zM544 157h5v5h-5zM549 157h5v5h-5zM534 162h5v5h-5zM529 167h5v5h-5zM524 172h5v5h-5zM519 177h5v5h-5zM474 182h5v5h-5zM479 182h5v5h-5zM484 182h5v5h-5zM509 182h5v5h-5zM464 187h5v5h-5zM459 192h5v5h-5zM564 192h5v5h-5zM449 207h5v5h-5zM444 222h5v5h-5zM444 227h5v5h-5zM449 237h5v5h-5zM459 247h5v5h-5zM499 252h5v5h-5zM474 257h5v5h-5zM484 257h5v5h-5z"/><path fill="#a19e9a" d="M579 122h5v5h-5zM564 142h5v5h-5zM409 147h5v5h-5zM519 147h5v5h-5zM419 152h5v5h-5zM424 152h5v5h-5zM434 152h5v5h-5zM439 152h5v5h-5zM479 152h5v5h-5zM559 152h5v5h-5zM459 157h5v5h-5zM464 157h5v5h-5zM469 157h5v5h-5zM529 157h5v5h-5zM529 162h5v5h-5zM559 162h5v5h-5zM469 177h5v5h-5zM474 177h5v5h-5zM479 177h5v5h-5zM514 177h5v5h-5zM464 182h5v5h-5zM459 187h5v5h-5zM549 217h5v5h-5zM469 257h5v5h-5z"/><path fill="#999693" d="M394 127h5v5h-5zM584 147h5v5h-5zM579 157h5v5h-5zM429 167h5v5h-5zM434 172h5v5h-5zM574 177h5v5h-5zM574 182h5v5h-5zM544 232h5v5h-5zM524 252h5v5h-5zM519 257h5v5h-5zM504 267h5v5h-5zM494 272h5v5h-5zM489 277h5v5h-5zM484 282h5v5h-5zM459 342h5v5h-5zM464 342h5v5h-5zM469 342h5v5h-5zM449 347h5v5h-5zM434 362h5v5h-5zM469 377h5v5h-5z"/><path fill="#9c9995" d="M399 127h5v5h-5zM584 137h5v5h-5zM439 202h5v5h-5zM484 272h5v5h-5zM439 362h5v5h-5z"/><path fill="#9f9c98" d="M404 127h5v5h-5zM579 132h5v5h-5zM514 152h5v5h-5zM519 157h5v5h-5zM454 172h5v5h-5zM494 172h5v5h-5zM454 177h5v5h-5zM529 232h5v5h-5zM524 237h5v5h-5zM509 252h5v5h-5zM469 262h5v5h-5zM489 262h5v5h-5zM449 362h5v5h-5zM454 362h5v5h-5zM444 367h5v5h-5zM459 367h5v5h-5zM459 372h5v5h-5z"/><path fill="#a19f9b" d="M409 127h5v5h-5zM569 132h5v5h-5zM499 142h5v5h-5zM504 142h5v5h-5zM484 147h5v5h-5zM524 147h5v5h-5zM454 152h5v5h-5zM459 152h5v5h-5zM464 152h5v5h-5zM469 152h5v5h-5zM554 152h5v5h-5zM534 157h5v5h-5zM554 162h5v5h-5zM564 177h5v5h-5zM469 182h5v5h-5zM489 182h5v5h-5zM494 182h5v5h-5zM499 182h5v5h-5zM504 182h5v5h-5zM554 212h5v5h-5zM444 217h5v5h-5zM529 227h5v5h-5zM519 237h5v5h-5zM514 242h5v5h-5zM464 252h5v5h-5z"/><path fill="#a29f9c" d="M569 127h5v5h-5zM489 142h5v5h-5zM554 142h5v5h-5zM464 147h5v5h-5zM469 147h5v5h-5zM534 147h5v5h-5zM549 147h5v5h-5zM539 162h5v5h-5zM549 162h5v5h-5zM454 242h5v5h-5zM479 257h5v5h-5z"/><path fill="#a09d99" d="M579 127h5v5h-5zM569 142h5v5h-5zM504 147h5v5h-5zM509 147h5v5h-5zM489 152h5v5h-5zM564 152h5v5h-5zM444 157h5v5h-5zM484 157h5v5h-5zM524 157h5v5h-5zM454 162h5v5h-5zM479 162h5v5h-5zM524 162h5v5h-5zM459 167h5v5h-5zM479 167h5v5h-5zM484 172h5v5h-5zM459 177h5v5h-5zM494 177h5v5h-5zM499 177h5v5h-5zM504 177h5v5h-5zM564 197h5v5h-5zM439 222h5v5h-5zM439 227h5v5h-5zM444 237h5v5h-5zM454 247h5v5h-5zM459 252h5v5h-5zM474 262h5v5h-5zM484 262h5v5h-5zM449 367h5v5h-5zM454 367h5v5h-5zM449 372h5v5h-5zM454 372h5v5h-5z"/><path fill="#95928f" d="M389 132h5v5h-5zM589 152h5v5h-5zM419 167h5v5h-5zM424 172h5v5h-5zM429 182h5v5h-5zM424 212h5v5h-5zM404 222h5v5h-5zM409 227h5v5h-5zM414 227h5v5h-5zM404 232h5v5h-5zM424 237h5v5h-5zM549 237h5v5h-5zM544 242h5v5h-5zM539 247h5v5h-5zM534 252h5v5h-5zM529 257h5v5h-5zM524 262h5v5h-5zM519 267h5v5h-5zM459 272h5v5h-5zM504 277h5v5h-5zM499 282h5v5h-5zM464 287h5v5h-5zM494 292h5v5h-5zM489 297h5v5h-5zM484 302h5v5h-5zM479 307h5v5h-5zM469 312h5v5h-5zM474 312h5v5h-5zM474 317h5v5h-5zM464 322h5v5h-5zM479 322h5v5h-5zM489 332h5v5h-5zM439 347h5v5h-5zM494 347h5v5h-5zM489 352h5v5h-5zM479 367h5v5h-5zM429 382h5v5h-5zM434 387h5v5h-5zM444 392h5v5h-5zM454 392h5v5h-5z"/><path fill="#989592" d="M394 132h5v5h-5zM419 162h5v5h-5zM434 177h5v5h-5zM574 187h5v5h-5zM434 197h5v5h-5zM429 212h5v5h-5zM394 222h5v5h-5zM384 227h5v5h-5zM424 227h5v5h-5zM389 232h5v5h-5zM394 232h5v5h-5zM429 237h5v5h-5zM539 237h5v5h-5zM534 242h5v5h-5zM444 252h5v5h-5zM499 272h5v5h-5zM489 282h5v5h-5zM484 287h5v5h-5zM464 337h5v5h-5zM469 337h5v5h-5zM474 337h5v5h-5zM454 342h5v5h-5zM479 342h5v5h-5zM479 347h5v5h-5zM474 367h5v5h-5zM429 372h5v5h-5z"/><path fill="#9b9895" d="M399 132h5v5h-5zM414 157h5v5h-5zM429 162h5v5h-5zM439 172h5v5h-5zM434 212h5v5h-5zM439 242h5v5h-5zM444 247h5v5h-5zM524 247h5v5h-5zM519 252h5v5h-5zM504 262h5v5h-5zM469 272h5v5h-5zM474 277h5v5h-5zM479 277h5v5h-5zM469 362h5v5h-5zM469 367h5v5h-5zM434 372h5v5h-5zM439 382h5v5h-5z"/><path fill="#9e9b98" d="M404 132h5v5h-5zM404 137h5v5h-5zM404 142h5v5h-5zM504 152h5v5h-5zM509 152h5v5h-5zM569 152h5v5h-5zM494 157h5v5h-5zM499 172h5v5h-5zM504 172h5v5h-5zM509 172h5v5h-5zM569 182h5v5h-5zM449 187h5v5h-5zM444 202h5v5h-5zM439 212h5v5h-5zM479 267h5v5h-5zM459 377h5v5h-5z"/><path fill="#a5a39f" d="M449 132h5v5h-5zM519 132h5v5h-5zM524 132h5v5h-5zM429 137h5v5h-5zM534 177h5v5h-5zM559 182h5v5h-5zM509 192h5v5h-5zM474 197h5v5h-5zM514 232h5v5h-5z"/><path fill="#8f8d8a" d="M384 137h5v5h-5zM419 207h5v5h-5zM389 242h5v5h-5zM544 257h5v5h-5zM539 262h5v5h-5zM534 267h5v5h-5zM509 297h5v5h-5zM454 302h5v5h-5zM499 317h5v5h-5zM449 327h5v5h-5zM499 352h5v5h-5zM494 357h5v5h-5zM419 367h5v5h-5zM444 397h5v5h-5z"/><path fill="#93918d" d="M389 137h5v5h-5zM424 177h5v5h-5zM579 182h5v5h-5zM424 207h5v5h-5zM414 232h5v5h-5zM399 237h5v5h-5zM549 242h5v5h-5zM544 247h5v5h-5zM434 252h5v5h-5zM539 252h5v5h-5zM534 257h5v5h-5zM529 262h5v5h-5zM524 267h5v5h-5zM459 277h5v5h-5zM484 312h5v5h-5zM489 327h5v5h-5zM494 332h5v5h-5zM429 357h5v5h-5zM479 372h5v5h-5zM439 392h5v5h-5zM459 392h5v5h-5z"/><path fill="#979491" d="M394 137h5v5h-5zM424 167h5v5h-5zM429 172h5v5h-5zM434 187h5v5h-5zM429 207h5v5h-5zM424 217h5v5h-5zM554 227h5v5h-5zM399 232h5v5h-5zM424 232h5v5h-5zM529 252h5v5h-5zM524 257h5v5h-5zM454 262h5v5h-5zM519 262h5v5h-5zM464 277h5v5h-5zM469 287h5v5h-5zM489 287h5v5h-5zM484 292h5v5h-5zM464 332h5v5h-5zM469 332h5v5h-5zM474 332h5v5h-5zM484 337h5v5h-5zM449 342h5v5h-5zM484 347h5v5h-5zM479 352h5v5h-5zM434 357h5v5h-5zM429 367h5v5h-5zM474 372h5v5h-5zM429 377h5v5h-5zM469 382h5v5h-5z"/><path fill="#9a9894" d="M399 137h5v5h-5zM584 142h5v5h-5zM579 152h5v5h-5zM574 162h5v5h-5zM434 167h5v5h-5zM429 222h5v5h-5zM389 227h5v5h-5zM429 227h5v5h-5zM529 242h5v5h-5zM454 257h5v5h-5zM464 267h5v5h-5zM489 272h5v5h-5zM459 347h5v5h-5zM464 347h5v5h-5zM469 357h5v5h-5zM434 367h5v5h-5zM469 372h5v5h-5z"/><path fill="#a3a19d" d="M489 137h5v5h-5zM509 137h5v5h-5zM549 137h5v5h-5zM449 142h5v5h-5zM454 142h5v5h-5zM424 147h5v5h-5zM544 167h5v5h-5zM469 192h5v5h-5zM454 207h5v5h-5zM449 217h5v5h-5zM509 242h5v5h-5z"/><path fill="#a09e9a" d="M569 137h5v5h-5zM494 147h5v5h-5zM414 152h5v5h-5zM429 152h5v5h-5zM484 152h5v5h-5zM524 152h5v5h-5zM454 157h5v5h-5zM474 157h5v5h-5zM559 157h5v5h-5zM524 167h5v5h-5zM564 172h5v5h-5zM464 177h5v5h-5zM484 177h5v5h-5zM449 202h5v5h-5zM444 212h5v5h-5z"/><path fill="#9f9c99" d="M574 137h5v5h-5zM569 147h5v5h-5zM494 152h5v5h-5zM439 157h5v5h-5zM489 157h5v5h-5zM564 157h5v5h-5zM449 162h5v5h-5zM484 162h5v5h-5zM564 162h5v5h-5zM454 167h5v5h-5zM484 167h5v5h-5zM519 167h5v5h-5zM489 172h5v5h-5zM514 172h5v5h-5zM454 182h5v5h-5zM439 217h5v5h-5zM439 232h5v5h-5zM519 242h5v5h-5zM514 247h5v5h-5zM464 257h5v5h-5zM499 257h5v5h-5zM444 372h5v5h-5zM449 377h5v5h-5zM454 377h5v5h-5z"/><path fill="#8d8a87" d="M384 142h5v5h-5zM584 187h5v5h-5zM374 222h5v5h-5zM374 227h5v5h-5zM409 242h5v5h-5zM394 252h5v5h-5zM399 252h5v5h-5zM399 257h5v5h-5zM524 287h5v5h-5zM514 302h5v5h-5zM509 312h5v5h-5zM429 347h5v5h-5zM459 397h5v5h-5z"/><path fill="#918f8b" d="M389 142h5v5h-5zM589 162h5v5h-5zM409 217h5v5h-5zM429 252h5v5h-5zM539 257h5v5h-5zM534 262h5v5h-5zM524 272h5v5h-5zM519 277h5v5h-5zM514 282h5v5h-5zM459 287h5v5h-5zM459 292h5v5h-5zM504 297h5v5h-5zM494 312h5v5h-5zM454 322h5v5h-5zM494 322h5v5h-5zM499 332h5v5h-5zM444 337h5v5h-5zM439 342h5v5h-5zM484 367h5v5h-5z"/><path fill="#95938f" d="M394 142h5v5h-5zM579 172h5v5h-5zM429 202h5v5h-5zM419 222h5v5h-5zM384 232h5v5h-5zM509 272h5v5h-5zM469 302h5v5h-5zM479 302h5v5h-5zM469 307h5v5h-5zM474 307h5v5h-5zM469 317h5v5h-5zM469 322h5v5h-5zM474 322h5v5h-5zM479 327h5v5h-5zM494 342h5v5h-5zM429 362h5v5h-5zM474 377h5v5h-5zM449 392h5v5h-5z"/><path fill="#9a9793" d="M399 142h5v5h-5zM454 387h5v5h-5z"/><path fill="#9e9c98" d="M574 142h5v5h-5zM499 152h5v5h-5zM434 157h5v5h-5zM444 162h5v5h-5zM489 162h5v5h-5zM519 162h5v5h-5zM449 167h5v5h-5zM489 167h5v5h-5zM449 192h5v5h-5zM459 362h5v5h-5zM444 377h5v5h-5z"/><path fill="#858380" d="M379 147h5v5h-5zM399 172h5v5h-5zM589 192h5v5h-5zM584 202h5v5h-5zM404 207h5v5h-5zM369 232h5v5h-5zM569 237h5v5h-5zM384 252h5v5h-5zM414 267h5v5h-5zM419 267h5v5h-5zM549 272h5v5h-5zM444 277h5v5h-5zM529 317h5v5h-5zM439 322h5v5h-5zM524 327h5v5h-5zM434 332h5v5h-5zM519 337h5v5h-5zM494 372h5v5h-5zM419 392h5v5h-5z"/><path fill="#898683" d="M384 147h5v5h-5zM574 217h5v5h-5zM569 227h5v5h-5zM394 267h5v5h-5zM444 317h5v5h-5zM514 327h5v5h-5zM429 342h5v5h-5zM484 382h5v5h-5z"/><path fill="#8e8b88" d="M389 147h5v5h-5zM399 157h5v5h-5zM594 162h5v5h-5zM564 227h5v5h-5zM404 242h5v5h-5zM414 242h5v5h-5zM554 252h5v5h-5zM534 272h5v5h-5zM529 277h5v5h-5zM454 292h5v5h-5zM514 297h5v5h-5zM504 317h5v5h-5zM504 322h5v5h-5zM439 337h5v5h-5zM479 382h5v5h-5zM424 387h5v5h-5zM439 397h5v5h-5z"/><path fill="#93908d" d="M394 147h5v5h-5zM399 152h5v5h-5zM589 157h5v5h-5zM414 167h5v5h-5zM584 167h5v5h-5zM389 217h5v5h-5zM379 227h5v5h-5zM559 227h5v5h-5zM554 237h5v5h-5zM424 242h5v5h-5zM519 272h5v5h-5zM504 287h5v5h-5zM499 297h5v5h-5zM494 302h5v5h-5zM459 307h5v5h-5zM489 307h5v5h-5zM459 312h5v5h-5zM459 317h5v5h-5zM484 317h5v5h-5zM499 342h5v5h-5zM494 352h5v5h-5zM484 362h5v5h-5zM469 387h5v5h-5z"/><path fill="#979591" d="M399 147h5v5h-5zM579 162h5v5h-5zM434 182h5v5h-5zM434 192h5v5h-5zM569 202h5v5h-5zM564 212h5v5h-5zM549 232h5v5h-5zM449 257h5v5h-5zM459 267h5v5h-5zM509 267h5v5h-5zM494 277h5v5h-5zM474 292h5v5h-5zM479 292h5v5h-5zM459 337h5v5h-5zM479 337h5v5h-5zM484 342h5v5h-5zM444 347h5v5h-5zM439 352h5v5h-5z"/><path fill="#9c9996" d="M404 147h5v5h-5zM419 157h5v5h-5zM504 162h5v5h-5zM439 167h5v5h-5zM444 177h5v5h-5zM444 182h5v5h-5zM444 187h5v5h-5zM544 227h5v5h-5zM454 352h5v5h-5zM459 352h5v5h-5zM444 357h5v5h-5zM464 357h5v5h-5zM464 377h5v5h-5zM459 382h5v5h-5z"/><path fill="#9d9b97" d="M574 147h5v5h-5zM409 152h5v5h-5zM499 157h5v5h-5zM569 157h5v5h-5zM439 162h5v5h-5zM444 167h5v5h-5zM449 177h5v5h-5zM449 182h5v5h-5zM444 197h5v5h-5zM564 202h5v5h-5zM549 222h5v5h-5zM439 237h5v5h-5zM449 247h5v5h-5zM454 252h5v5h-5zM439 372h5v5h-5zM449 382h5v5h-5z"/><path fill="#9b9995" d="M579 147h5v5h-5zM574 157h5v5h-5zM494 267h5v5h-5zM449 352h5v5h-5zM464 352h5v5h-5z"/><path fill="#969490" d="M589 147h5v5h-5zM414 162h5v5h-5zM579 167h5v5h-5zM384 222h5v5h-5zM399 222h5v5h-5zM404 227h5v5h-5zM534 247h5v5h-5zM514 267h5v5h-5zM504 272h5v5h-5zM494 282h5v5h-5zM469 292h5v5h-5zM474 297h5v5h-5zM479 297h5v5h-5zM469 327h5v5h-5zM479 332h5v5h-5zM489 342h5v5h-5zM489 347h5v5h-5zM479 357h5v5h-5z"/><path fill="#817f7c" d="M379 152h5v5h-5zM389 157h5v5h-5zM594 192h5v5h-5zM579 222h5v5h-5zM369 237h5v5h-5zM384 267h5v5h-5zM554 272h5v5h-5zM429 277h5v5h-5zM439 282h5v5h-5zM549 282h5v5h-5zM434 292h5v5h-5zM434 297h5v5h-5zM539 307h5v5h-5zM539 312h5v5h-5zM529 337h5v5h-5zM494 377h5v5h-5zM409 387h5v5h-5zM414 392h5v5h-5zM429 402h5v5h-5zM444 407h5v5h-5zM449 407h5v5h-5z"/><path fill="#84817e" d="M384 152h5v5h-5zM594 187h5v5h-5zM579 217h5v5h-5zM574 227h5v5h-5zM569 247h5v5h-5zM384 257h5v5h-5zM559 262h5v5h-5zM439 297h5v5h-5zM439 307h5v5h-5zM439 312h5v5h-5zM424 397h5v5h-5z"/><path fill="#888682" d="M389 152h5v5h-5zM579 207h5v5h-5zM384 247h5v5h-5z"/><path fill="#8d8b88" d="M394 152h5v5h-5zM589 172h5v5h-5zM414 177h5v5h-5zM419 187h5v5h-5zM579 197h5v5h-5zM419 202h5v5h-5zM399 247h5v5h-5zM549 257h5v5h-5zM539 267h5v5h-5zM454 282h5v5h-5zM509 307h5v5h-5zM434 342h5v5h-5zM504 347h5v5h-5zM419 362h5v5h-5zM419 382h5v5h-5zM469 392h5v5h-5z"/><path fill="#999692" d="M404 152h5v5h-5zM434 202h5v5h-5zM389 222h5v5h-5zM439 247h5v5h-5zM464 272h5v5h-5z"/><path fill="#9c9a96" d="M574 152h5v5h-5zM434 162h5v5h-5zM509 162h5v5h-5zM444 172h5v5h-5zM444 192h5v5h-5zM569 192h5v5h-5zM434 217h5v5h-5zM434 232h5v5h-5zM534 232h5v5h-5zM529 237h5v5h-5zM509 257h5v5h-5zM499 262h5v5h-5zM489 267h5v5h-5zM474 272h5v5h-5zM479 272h5v5h-5z"/><path fill="#989591" d="M584 152h5v5h-5zM424 222h5v5h-5zM439 387h5v5h-5z"/><path fill="#7d7b78" d="M379 157h5v5h-5zM384 162h5v5h-5zM384 167h5v5h-5zM379 177h5v5h-5zM379 182h5v5h-5zM399 187h5v5h-5zM404 197h5v5h-5zM584 222h5v5h-5zM579 237h5v5h-5zM369 242h5v5h-5zM579 242h5v5h-5zM374 247h5v5h-5zM559 272h5v5h-5zM389 277h5v5h-5zM419 282h5v5h-5zM424 292h5v5h-5zM549 297h5v5h-5zM429 302h5v5h-5zM544 317h5v5h-5zM544 322h5v5h-5zM429 327h5v5h-5zM414 342h5v5h-5zM409 347h5v5h-5zM399 362h5v5h-5zM504 367h5v5h-5zM399 377h5v5h-5zM404 387h5v5h-5zM409 392h5v5h-5zM424 402h5v5h-5zM434 407h5v5h-5z"/><path fill="#7f7c79" d="M384 157h5v5h-5zM434 317h5v5h-5z"/><path fill="#878582" d="M394 157h5v5h-5zM399 167h5v5h-5zM409 182h5v5h-5zM374 212h5v5h-5zM369 227h5v5h-5zM379 242h5v5h-5zM559 257h5v5h-5zM554 262h5v5h-5zM539 282h5v5h-5zM534 292h5v5h-5zM529 302h5v5h-5zM524 312h5v5h-5zM519 322h5v5h-5zM439 327h5v5h-5zM419 352h5v5h-5zM499 362h5v5h-5zM409 372h5v5h-5zM429 397h5v5h-5zM439 402h5v5h-5z"/><path fill="#94918e" d="M404 157h5v5h-5zM429 192h5v5h-5zM574 197h5v5h-5zM389 237h5v5h-5zM449 262h5v5h-5zM454 267h5v5h-5zM509 277h5v5h-5zM504 282h5v5h-5zM494 297h5v5h-5zM489 302h5v5h-5zM484 307h5v5h-5zM449 337h5v5h-5zM424 377h5v5h-5z"/><path fill="#989692" d="M409 157h5v5h-5zM399 227h5v5h-5zM434 242h5v5h-5zM529 247h5v5h-5zM514 262h5v5h-5zM469 282h5v5h-5zM474 287h5v5h-5zM479 287h5v5h-5zM474 342h5v5h-5zM474 347h5v5h-5zM474 352h5v5h-5zM474 357h5v5h-5zM474 362h5v5h-5zM434 382h5v5h-5zM459 387h5v5h-5z"/><path fill="#9d9a97" d="M509 157h5v5h-5zM514 162h5v5h-5zM569 162h5v5h-5zM499 167h5v5h-5zM509 167h5v5h-5zM569 167h5v5h-5zM569 172h5v5h-5zM559 212h5v5h-5zM434 222h5v5h-5zM434 227h5v5h-5zM519 247h5v5h-5zM514 252h5v5h-5zM459 257h5v5h-5zM449 357h5v5h-5zM459 357h5v5h-5zM464 362h5v5h-5zM439 367h5v5h-5zM464 367h5v5h-5zM464 372h5v5h-5zM454 382h5v5h-5z"/><path fill="#969390" d="M584 157h5v5h-5zM429 177h5v5h-5zM574 192h5v5h-5zM559 222h5v5h-5zM419 227h5v5h-5zM429 242h5v5h-5zM539 242h5v5h-5zM434 247h5v5h-5zM439 252h5v5h-5zM499 277h5v5h-5zM464 282h5v5h-5zM489 292h5v5h-5zM469 297h5v5h-5zM484 297h5v5h-5zM474 302h5v5h-5zM464 327h5v5h-5zM474 327h5v5h-5zM459 332h5v5h-5zM484 332h5v5h-5zM454 337h5v5h-5zM489 337h5v5h-5zM484 352h5v5h-5zM479 362h5v5h-5zM464 387h5v5h-5z"/><path fill="#7c7a77" d="M379 162h5v5h-5zM379 167h5v5h-5zM379 172h5v5h-5zM379 187h5v5h-5zM384 187h5v5h-5zM389 187h5v5h-5zM379 197h5v5h-5zM389 202h5v5h-5zM589 212h5v5h-5zM584 227h5v5h-5zM364 237h5v5h-5zM579 247h5v5h-5zM379 257h5v5h-5zM564 267h5v5h-5zM414 282h5v5h-5zM419 287h5v5h-5zM554 287h5v5h-5zM424 297h5v5h-5zM549 302h5v5h-5zM544 327h5v5h-5zM424 332h5v5h-5zM419 337h5v5h-5zM539 337h5v5h-5zM524 347h5v5h-5zM499 377h5v5h-5zM414 397h5v5h-5z"/><path fill="#7f7d7a" d="M389 162h5v5h-5zM389 167h5v5h-5zM384 177h5v5h-5zM389 182h5v5h-5zM394 182h5v5h-5zM594 197h5v5h-5zM374 202h5v5h-5zM379 202h5v5h-5zM584 217h5v5h-5zM569 257h5v5h-5zM564 262h5v5h-5zM414 277h5v5h-5zM554 277h5v5h-5zM429 282h5v5h-5zM429 287h5v5h-5zM429 292h5v5h-5zM429 297h5v5h-5zM544 302h5v5h-5zM434 307h5v5h-5zM539 332h5v5h-5zM534 337h5v5h-5zM519 347h5v5h-5zM514 352h5v5h-5zM404 357h5v5h-5zM499 372h5v5h-5zM489 387h5v5h-5zM484 392h5v5h-5z"/><path fill="#84827f" d="M394 162h5v5h-5zM379 207h5v5h-5zM384 207h5v5h-5zM369 212h5v5h-5zM554 267h5v5h-5zM434 272h5v5h-5zM444 282h5v5h-5zM444 287h5v5h-5zM539 292h5v5h-5zM439 302h5v5h-5zM534 307h5v5h-5zM439 317h5v5h-5zM529 327h5v5h-5zM524 332h5v5h-5zM424 342h5v5h-5zM419 347h5v5h-5zM409 382h5v5h-5zM484 387h5v5h-5zM479 392h5v5h-5zM434 402h5v5h-5z"/><path fill="#8a8784" d="M399 162h5v5h-5zM594 172h5v5h-5zM589 182h5v5h-5zM389 257h5v5h-5zM409 257h5v5h-5zM404 262h5v5h-5zM439 267h5v5h-5z"/><path fill="#8f8d89" d="M404 162h5v5h-5zM589 167h5v5h-5zM414 212h5v5h-5zM504 307h5v5h-5zM424 357h5v5h-5z"/><path fill="#93918e" d="M409 162h5v5h-5zM409 232h5v5h-5zM429 247h5v5h-5zM499 292h5v5h-5zM459 322h5v5h-5zM484 322h5v5h-5zM424 367h5v5h-5z"/><path fill="#999793" d="M424 162h5v5h-5zM574 172h5v5h-5zM429 217h5v5h-5zM559 217h5v5h-5zM429 232h5v5h-5zM474 282h5v5h-5zM479 282h5v5h-5zM469 347h5v5h-5zM444 387h5v5h-5z"/><path fill="#94928e" d="M584 162h5v5h-5zM579 177h5v5h-5zM429 187h5v5h-5zM429 197h5v5h-5zM569 207h5v5h-5zM419 217h5v5h-5zM564 217h5v5h-5zM409 222h5v5h-5zM414 222h5v5h-5zM554 232h5v5h-5zM394 237h5v5h-5zM514 272h5v5h-5zM499 287h5v5h-5zM464 292h5v5h-5zM464 297h5v5h-5zM464 302h5v5h-5zM464 312h5v5h-5zM479 312h5v5h-5zM479 317h5v5h-5zM459 327h5v5h-5zM454 332h5v5h-5zM494 337h5v5h-5zM444 342h5v5h-5zM434 352h5v5h-5zM424 372h5v5h-5z"/><path fill="#83817e" d="M394 167h5v5h-5zM399 177h5v5h-5zM404 182h5v5h-5zM409 192h5v5h-5zM589 197h5v5h-5zM374 207h5v5h-5zM389 207h5v5h-5zM399 207h5v5h-5zM564 257h5v5h-5zM394 272h5v5h-5zM399 272h5v5h-5zM424 272h5v5h-5zM429 272h5v5h-5zM549 277h5v5h-5zM544 287h5v5h-5zM439 292h5v5h-5zM539 297h5v5h-5zM534 312h5v5h-5zM534 317h5v5h-5zM534 322h5v5h-5zM529 332h5v5h-5zM514 347h5v5h-5zM414 352h5v5h-5zM499 367h5v5h-5zM489 382h5v5h-5zM464 402h5v5h-5z"/><path fill="#8c8986" d="M404 167h5v5h-5zM594 167h5v5h-5zM589 177h5v5h-5zM414 207h5v5h-5zM564 232h5v5h-5zM414 247h5v5h-5zM399 262h5v5h-5zM534 277h5v5h-5zM449 302h5v5h-5zM514 307h5v5h-5zM509 322h5v5h-5zM444 327h5v5h-5zM424 352h5v5h-5zM414 372h5v5h-5z"/><path fill="#908d8a" d="M409 167h5v5h-5zM414 172h5v5h-5zM584 177h5v5h-5zM579 192h5v5h-5zM399 242h5v5h-5zM549 252h5v5h-5zM434 257h5v5h-5zM449 267h5v5h-5zM529 272h5v5h-5zM524 277h5v5h-5zM519 282h5v5h-5zM514 287h5v5h-5zM454 307h5v5h-5zM499 312h5v5h-5zM499 322h5v5h-5zM489 362h5v5h-5zM419 377h5v5h-5zM449 397h5v5h-5z"/><path fill="#9a9794" d="M574 167h5v5h-5zM439 177h5v5h-5zM439 182h5v5h-5zM439 187h5v5h-5zM439 192h5v5h-5zM569 197h5v5h-5zM434 207h5v5h-5zM554 222h5v5h-5zM394 227h5v5h-5zM549 227h5v5h-5zM534 237h5v5h-5zM459 262h5v5h-5zM509 262h5v5h-5zM499 267h5v5h-5zM469 277h5v5h-5zM484 277h5v5h-5zM454 347h5v5h-5zM444 352h5v5h-5zM469 352h5v5h-5zM439 357h5v5h-5zM434 377h5v5h-5zM464 382h5v5h-5zM449 387h5v5h-5z"/><path fill="#7e7c79" d="M384 172h5v5h-5zM384 182h5v5h-5zM404 192h5v5h-5zM599 192h5v5h-5zM384 202h5v5h-5zM589 207h5v5h-5zM579 232h5v5h-5zM379 252h5v5h-5zM574 252h5v5h-5zM384 272h5v5h-5zM394 277h5v5h-5zM399 277h5v5h-5zM404 277h5v5h-5zM409 277h5v5h-5zM424 282h5v5h-5zM549 292h5v5h-5zM544 307h5v5h-5zM544 312h5v5h-5zM399 367h5v5h-5zM399 372h5v5h-5zM494 382h5v5h-5zM479 397h5v5h-5zM459 407h5v5h-5z"/><path fill="#807e7b" d="M389 172h5v5h-5zM404 187h5v5h-5zM599 187h5v5h-5zM404 202h5v5h-5zM589 202h5v5h-5zM574 242h5v5h-5zM559 267h5v5h-5zM424 277h5v5h-5zM434 282h5v5h-5zM434 287h5v5h-5zM549 287h5v5h-5zM544 297h5v5h-5zM434 302h5v5h-5zM434 322h5v5h-5zM539 322h5v5h-5zM539 327h5v5h-5zM429 332h5v5h-5zM424 337h5v5h-5zM419 342h5v5h-5zM524 342h5v5h-5zM414 347h5v5h-5zM509 357h5v5h-5zM404 382h5v5h-5zM419 397h5v5h-5zM439 407h5v5h-5zM454 407h5v5h-5z"/><path fill="#82807d" d="M394 172h5v5h-5zM599 182h5v5h-5zM394 207h5v5h-5zM584 207h5v5h-5zM364 217h5v5h-5zM364 222h5v5h-5zM374 242h5v5h-5zM379 247h5v5h-5zM569 252h5v5h-5zM409 272h5v5h-5zM414 272h5v5h-5zM419 272h5v5h-5zM439 287h5v5h-5zM539 302h5v5h-5zM434 327h5v5h-5zM409 357h5v5h-5zM404 367h5v5h-5zM404 372h5v5h-5z"/><path fill="#898783" d="M404 172h5v5h-5zM414 362h5v5h-5zM474 392h5v5h-5zM444 402h5v5h-5zM449 402h5v5h-5z"/><path fill="#8c8a87" d="M409 172h5v5h-5zM419 192h5v5h-5zM419 197h5v5h-5zM379 237h5v5h-5zM389 247h5v5h-5zM419 252h5v5h-5zM394 262h5v5h-5zM444 267h5v5h-5zM449 272h5v5h-5zM449 307h5v5h-5zM449 312h5v5h-5z"/><path fill="#92908c" d="M419 172h5v5h-5zM394 217h5v5h-5zM414 217h5v5h-5zM489 312h5v5h-5zM489 322h5v5h-5zM494 327h5v5h-5zM499 337h5v5h-5zM499 347h5v5h-5z"/><path fill="#918e8b" d="M584 172h5v5h-5zM424 187h5v5h-5zM424 197h5v5h-5zM574 202h5v5h-5zM404 217h5v5h-5zM564 222h5v5h-5zM384 237h5v5h-5zM414 237h5v5h-5zM394 242h5v5h-5zM424 247h5v5h-5zM444 262h5v5h-5zM454 272h5v5h-5zM499 307h5v5h-5zM494 317h5v5h-5zM434 347h5v5h-5zM479 377h5v5h-5zM464 392h5v5h-5z"/><path fill="#817e7b" d="M389 177h5v5h-5zM399 182h5v5h-5zM584 212h5v5h-5zM574 237h5v5h-5zM539 317h5v5h-5zM404 362h5v5h-5z"/><path fill="#827f7c" d="M394 177h5v5h-5zM364 227h5v5h-5zM574 232h5v5h-5zM389 272h5v5h-5zM434 277h5v5h-5zM544 292h5v5h-5zM534 332h5v5h-5zM504 362h5v5h-5zM404 377h5v5h-5z"/><path fill="#868481" d="M404 177h5v5h-5zM369 217h5v5h-5zM574 222h5v5h-5zM569 232h5v5h-5zM564 252h5v5h-5zM389 267h5v5h-5zM424 267h5v5h-5zM544 277h5v5h-5zM539 287h5v5h-5zM529 307h5v5h-5zM524 322h5v5h-5zM519 332h5v5h-5zM514 342h5v5h-5zM414 357h5v5h-5zM504 357h5v5h-5zM409 367h5v5h-5zM409 377h5v5h-5z"/><path fill="#8a8884" d="M409 177h5v5h-5zM534 282h5v5h-5zM519 307h5v5h-5zM444 322h5v5h-5zM419 387h5v5h-5z"/><path fill="#908e8b" d="M419 177h5v5h-5zM424 192h5v5h-5zM379 232h5v5h-5zM559 232h5v5h-5zM509 292h5v5h-5zM454 317h5v5h-5zM419 372h5v5h-5zM434 392h5v5h-5z"/><path fill="#888582" d="M594 177h5v5h-5zM589 187h5v5h-5zM414 192h5v5h-5zM414 197h5v5h-5zM584 197h5v5h-5zM369 222h5v5h-5zM414 262h5v5h-5zM549 267h5v5h-5zM444 302h5v5h-5zM514 337h5v5h-5zM454 402h5v5h-5z"/><path fill="#8b8986" d="M414 182h5v5h-5zM404 212h5v5h-5zM574 212h5v5h-5zM569 222h5v5h-5zM404 247h5v5h-5zM404 252h5v5h-5zM539 272h5v5h-5zM524 292h5v5h-5zM509 327h5v5h-5zM509 332h5v5h-5zM509 337h5v5h-5zM499 357h5v5h-5zM414 377h5v5h-5z"/><path fill="#8f8c89" d="M419 182h5v5h-5zM559 237h5v5h-5zM424 252h5v5h-5zM514 292h5v5h-5zM504 332h5v5h-5zM504 337h5v5h-5zM504 342h5v5h-5zM484 372h5v5h-5zM454 397h5v5h-5z"/><path fill="#928f8c" d="M424 182h5v5h-5zM579 187h5v5h-5zM424 202h5v5h-5zM419 212h5v5h-5zM379 222h5v5h-5zM549 247h5v5h-5zM439 257h5v5h-5zM459 282h5v5h-5zM504 292h5v5h-5zM459 297h5v5h-5zM499 302h5v5h-5zM494 307h5v5h-5zM489 317h5v5h-5zM449 332h5v5h-5zM424 362h5v5h-5zM429 387h5v5h-5z"/><path fill="#8e8c89" d="M584 182h5v5h-5zM379 217h5v5h-5zM569 217h5v5h-5zM454 277h5v5h-5zM519 287h5v5h-5zM454 297h5v5h-5zM509 302h5v5h-5zM504 312h5v5h-5zM444 332h5v5h-5zM474 387h5v5h-5z"/><path fill="#868380" d="M594 182h5v5h-5zM579 212h5v5h-5zM409 267h5v5h-5zM439 272h5v5h-5zM444 292h5v5h-5zM534 297h5v5h-5zM529 312h5v5h-5zM414 387h5v5h-5zM459 402h5v5h-5z"/><path fill="#7c7977" d="M394 187h5v5h-5zM379 262h5v5h-5zM569 262h5v5h-5zM474 402h5v5h-5z"/><path fill="#85827f" d="M409 187h5v5h-5zM409 202h5v5h-5zM569 242h5v5h-5zM544 282h5v5h-5zM534 302h5v5h-5zM529 322h5v5h-5zM429 337h5v5h-5zM509 352h5v5h-5zM409 362h5v5h-5z"/><path fill="#898784" d="M414 187h5v5h-5zM414 202h5v5h-5zM379 212h5v5h-5zM564 242h5v5h-5zM414 257h5v5h-5zM389 262h5v5h-5zM424 262h5v5h-5zM449 277h5v5h-5zM539 277h5v5h-5zM449 292h5v5h-5zM529 292h5v5h-5zM524 302h5v5h-5zM519 312h5v5h-5zM514 322h5v5h-5zM434 337h5v5h-5zM414 382h5v5h-5zM479 387h5v5h-5zM424 392h5v5h-5z"/><path fill="#7b7976" d="M379 192h5v5h-5zM384 197h5v5h-5zM599 197h5v5h-5zM394 202h5v5h-5zM594 207h5v5h-5zM589 217h5v5h-5zM584 232h5v5h-5zM584 237h5v5h-5zM574 257h5v5h-5zM379 267h5v5h-5zM384 277h5v5h-5zM559 277h5v5h-5zM409 282h5v5h-5zM419 292h5v5h-5zM554 292h5v5h-5zM429 307h5v5h-5zM549 307h5v5h-5zM534 342h5v5h-5zM519 352h5v5h-5zM509 362h5v5h-5zM399 382h5v5h-5zM464 407h5v5h-5z"/><path fill="#7a7876" d="M384 192h5v5h-5zM549 312h5v5h-5zM544 332h5v5h-5z"/><path fill="#797774" d="M389 192h5v5h-5zM389 197h5v5h-5zM399 197h5v5h-5zM599 202h5v5h-5zM594 212h5v5h-5zM589 227h5v5h-5zM379 272h5v5h-5zM559 282h5v5h-5zM409 287h5v5h-5zM414 292h5v5h-5zM419 297h5v5h-5zM429 317h5v5h-5zM549 322h5v5h-5zM414 337h5v5h-5zM529 347h5v5h-5zM504 372h5v5h-5zM399 387h5v5h-5zM404 392h5v5h-5zM409 397h5v5h-5zM444 412h5v5h-5zM449 412h5v5h-5z"/><path fill="#787673" d="M394 192h5v5h-5zM594 217h5v5h-5zM589 232h5v5h-5zM589 237h5v5h-5zM589 242h5v5h-5zM369 247h5v5h-5zM374 252h5v5h-5zM584 252h5v5h-5zM579 257h5v5h-5zM574 262h5v5h-5zM569 267h5v5h-5zM384 282h5v5h-5zM389 287h5v5h-5zM394 287h5v5h-5zM399 287h5v5h-5zM559 287h5v5h-5zM399 292h5v5h-5zM404 292h5v5h-5zM409 292h5v5h-5zM424 327h5v5h-5zM419 332h5v5h-5zM544 337h5v5h-5zM404 342h5v5h-5zM539 342h5v5h-5zM399 347h5v5h-5zM499 382h5v5h-5zM469 407h5v5h-5zM439 412h5v5h-5zM454 412h5v5h-5z"/><path fill="#7a7875" d="M399 192h5v5h-5zM589 222h5v5h-5zM584 242h5v5h-5zM389 282h5v5h-5zM394 282h5v5h-5zM399 282h5v5h-5zM404 282h5v5h-5zM424 302h5v5h-5zM549 317h5v5h-5zM429 322h5v5h-5zM409 342h5v5h-5zM404 347h5v5h-5zM399 352h5v5h-5zM489 392h5v5h-5zM419 402h5v5h-5zM429 407h5v5h-5z"/><path fill="#8a8885" d="M584 192h5v5h-5zM579 202h5v5h-5zM564 237h5v5h-5zM409 247h5v5h-5zM389 252h5v5h-5zM409 252h5v5h-5zM559 252h5v5h-5zM419 257h5v5h-5zM429 262h5v5h-5zM549 262h5v5h-5zM524 297h5v5h-5zM514 317h5v5h-5zM439 332h5v5h-5zM509 342h5v5h-5zM504 352h5v5h-5zM489 372h5v5h-5zM464 397h5v5h-5z"/><path fill="#777572" d="M394 197h5v5h-5zM594 222h5v5h-5zM589 247h5v5h-5zM389 292h5v5h-5zM559 292h5v5h-5zM394 297h5v5h-5zM399 297h5v5h-5zM419 302h5v5h-5zM424 307h5v5h-5zM554 312h5v5h-5zM409 337h5v5h-5zM394 352h5v5h-5zM524 352h5v5h-5zM509 367h5v5h-5z"/><path fill="#83807d" d="M409 197h5v5h-5zM384 262h5v5h-5zM404 272h5v5h-5zM439 277h5v5h-5zM534 327h5v5h-5zM524 337h5v5h-5zM519 342h5v5h-5zM474 397h5v5h-5z"/><path fill="#9b9894" d="M439 197h5v5h-5zM564 207h5v5h-5zM539 232h5v5h-5zM434 237h5v5h-5zM449 252h5v5h-5zM514 257h5v5h-5z"/><path fill="#7d7a78" d="M399 202h5v5h-5zM594 202h5v5h-5zM404 352h5v5h-5z"/><path fill="#888683" d="M409 207h5v5h-5zM564 247h5v5h-5zM409 262h5v5h-5zM419 262h5v5h-5zM399 267h5v5h-5zM434 267h5v5h-5zM444 272h5v5h-5zM544 272h5v5h-5zM449 282h5v5h-5zM449 287h5v5h-5zM534 287h5v5h-5zM529 297h5v5h-5zM444 307h5v5h-5zM524 307h5v5h-5zM444 312h5v5h-5zM519 317h5v5h-5zM514 332h5v5h-5zM424 347h5v5h-5zM509 347h5v5h-5zM494 367h5v5h-5z"/><path fill="#8e8c88" d="M574 207h5v5h-5zM559 242h5v5h-5zM394 247h5v5h-5zM419 247h5v5h-5zM429 257h5v5h-5zM439 262h5v5h-5zM524 282h5v5h-5zM449 322h5v5h-5zM504 327h5v5h-5z"/><path fill="#777573" d="M599 207h5v5h-5zM379 277h5v5h-5zM394 292h5v5h-5zM414 297h5v5h-5zM479 402h5v5h-5z"/><path fill="#8b8885" d="M384 212h5v5h-5zM394 212h5v5h-5zM399 212h5v5h-5zM374 217h5v5h-5zM374 232h5v5h-5zM414 252h5v5h-5zM554 257h5v5h-5zM544 267h5v5h-5zM529 287h5v5h-5zM449 297h5v5h-5zM419 357h5v5h-5z"/><path fill="#8b8985" d="M389 212h5v5h-5zM404 257h5v5h-5zM519 302h5v5h-5zM514 312h5v5h-5zM414 367h5v5h-5zM434 397h5v5h-5z"/><path fill="#8d8b87" d="M409 212h5v5h-5zM559 247h5v5h-5zM394 257h5v5h-5zM544 262h5v5h-5zM454 287h5v5h-5zM519 292h5v5h-5zM449 317h5v5h-5zM489 367h5v5h-5zM429 392h5v5h-5z"/><path fill="#918f8c" d="M569 212h5v5h-5zM384 217h5v5h-5zM399 217h5v5h-5zM404 237h5v5h-5zM554 242h5v5h-5zM544 252h5v5h-5zM529 267h5v5h-5zM509 287h5v5h-5zM424 382h5v5h-5z"/><path fill="#767471" d="M599 212h5v5h-5zM594 227h5v5h-5zM374 257h5v5h-5zM564 277h5v5h-5zM379 282h5v5h-5zM389 297h5v5h-5zM559 297h5v5h-5zM554 317h5v5h-5zM404 337h5v5h-5zM394 347h5v5h-5zM534 347h5v5h-5zM519 357h5v5h-5zM504 377h5v5h-5zM434 412h5v5h-5zM459 412h5v5h-5z"/><path fill="#73716e" d="M604 212h5v5h-5zM599 227h5v5h-5zM379 292h5v5h-5zM564 292h5v5h-5zM384 302h5v5h-5zM389 307h5v5h-5zM559 312h5v5h-5zM554 327h5v5h-5zM394 332h5v5h-5zM399 332h5v5h-5zM539 347h5v5h-5zM429 412h5v5h-5z"/><path fill="#757370" d="M599 217h5v5h-5zM594 237h5v5h-5zM589 252h5v5h-5zM584 257h5v5h-5zM579 262h5v5h-5zM374 267h5v5h-5zM574 267h5v5h-5zM564 282h5v5h-5zM384 292h5v5h-5zM404 302h5v5h-5zM414 302h5v5h-5zM559 302h5v5h-5zM424 312h5v5h-5zM424 322h5v5h-5zM414 332h5v5h-5zM399 337h5v5h-5zM394 342h5v5h-5zM494 392h5v5h-5zM404 397h5v5h-5zM489 397h5v5h-5z"/><path fill="#72706d" d="M604 217h5v5h-5zM599 237h5v5h-5zM369 257h5v5h-5zM589 257h5v5h-5zM584 262h5v5h-5zM579 267h5v5h-5zM569 277h5v5h-5zM564 297h5v5h-5zM384 307h5v5h-5zM409 307h5v5h-5zM414 307h5v5h-5zM389 312h5v5h-5zM394 312h5v5h-5zM394 327h5v5h-5zM399 327h5v5h-5zM389 332h5v5h-5zM524 357h5v5h-5zM504 382h5v5h-5z"/><path fill="#74726f" d="M599 222h5v5h-5zM369 252h5v5h-5zM379 287h5v5h-5zM564 287h5v5h-5zM384 297h5v5h-5zM419 307h5v5h-5zM559 307h5v5h-5zM419 327h5v5h-5zM409 332h5v5h-5zM394 337h5v5h-5zM544 342h5v5h-5zM529 352h5v5h-5zM499 387h5v5h-5zM464 412h5v5h-5z"/><path fill="#716f6c" d="M604 222h5v5h-5zM369 262h5v5h-5zM569 282h5v5h-5zM564 302h5v5h-5zM419 312h5v5h-5zM384 317h5v5h-5zM399 317h5v5h-5zM399 322h5v5h-5zM409 327h5v5h-5zM534 352h5v5h-5zM514 367h5v5h-5zM414 407h5v5h-5zM479 407h5v5h-5zM469 412h5v5h-5z"/><path fill="#807d7a" d="M579 227h5v5h-5zM364 232h5v5h-5zM574 247h5v5h-5zM419 277h5v5h-5zM469 402h5v5h-5z"/><path fill="#706e6c" d="M604 227h5v5h-5zM404 312h5v5h-5zM519 362h5v5h-5zM494 397h5v5h-5zM404 402h5v5h-5zM439 417h5v5h-5z"/><path fill="#94928f" d="M419 232h5v5h-5zM444 257h5v5h-5zM464 307h5v5h-5zM464 317h5v5h-5zM484 327h5v5h-5zM484 357h5v5h-5z"/><path fill="#757371" d="M594 232h5v5h-5zM374 262h5v5h-5zM394 302h5v5h-5zM399 302h5v5h-5zM549 332h5v5h-5zM514 362h5v5h-5z"/><path fill="#72706e" d="M599 232h5v5h-5zM379 297h5v5h-5zM404 307h5v5h-5zM389 337h5v5h-5zM549 337h5v5h-5z"/><path fill="#878481" d="M374 237h5v5h-5zM429 267h5v5h-5zM524 317h5v5h-5zM519 327h5v5h-5zM469 397h5v5h-5z"/><path fill="#908e8a" d="M409 237h5v5h-5zM419 242h5v5h-5zM554 247h5v5h-5zM504 302h5v5h-5zM454 312h5v5h-5zM499 327h5v5h-5zM429 352h5v5h-5z"/><path fill="#92908d" d="M419 237h5v5h-5zM514 277h5v5h-5zM509 282h5v5h-5zM459 302h5v5h-5zM454 327h5v5h-5zM489 357h5v5h-5zM474 382h5v5h-5z"/><path fill="#979490" d="M544 237h5v5h-5z"/><path fill="#787674" d="M364 242h5v5h-5zM564 272h5v5h-5zM404 287h5v5h-5zM554 302h5v5h-5zM394 357h5v5h-5z"/><path fill="#8c8a86" d="M384 242h5v5h-5zM424 257h5v5h-5zM434 262h5v5h-5zM529 282h5v5h-5zM519 297h5v5h-5zM509 317h5v5h-5zM494 362h5v5h-5zM484 377h5v5h-5z"/><path fill="#747270" d="M594 242h5v5h-5zM374 272h5v5h-5zM569 272h5v5h-5zM389 302h5v5h-5zM409 302h5v5h-5zM554 322h5v5h-5zM474 407h5v5h-5z"/><path fill="#797775" d="M584 247h5v5h-5zM429 312h5v5h-5z"/><path fill="#73716f" d="M594 247h5v5h-5zM374 277h5v5h-5zM399 307h5v5h-5zM404 332h5v5h-5zM509 372h5v5h-5zM409 402h5v5h-5zM484 402h5v5h-5zM419 407h5v5h-5z"/><path fill="#7b7876" d="M579 252h5v5h-5zM414 287h5v5h-5zM514 357h5v5h-5z"/><path fill="#716f6d" d="M594 252h5v5h-5zM574 272h5v5h-5zM384 312h5v5h-5zM389 317h5v5h-5zM394 317h5v5h-5zM559 317h5v5h-5zM389 322h5v5h-5zM394 322h5v5h-5zM389 327h5v5h-5zM404 327h5v5h-5zM444 417h5v5h-5zM449 417h5v5h-5z"/><path fill="#6f6d6b" d="M589 262h5v5h-5zM584 267h5v5h-5zM409 312h5v5h-5zM414 312h5v5h-5zM404 317h5v5h-5zM419 317h5v5h-5zM489 402h5v5h-5z"/><path fill="#878581" d="M404 267h5v5h-5zM444 297h5v5h-5zM489 377h5v5h-5z"/><path fill="#6c6a68" d="M589 267h5v5h-5zM584 272h5v5h-5zM579 277h5v5h-5zM574 287h5v5h-5zM509 382h5v5h-5zM429 417h5v5h-5zM464 417h5v5h-5z"/><path fill="#6f6d6a" d="M579 272h5v5h-5zM574 277h5v5h-5zM569 292h5v5h-5zM409 322h5v5h-5zM414 322h5v5h-5zM549 342h5v5h-5zM544 347h5v5h-5zM529 357h5v5h-5zM434 417h5v5h-5z"/><path fill="#6a6865" d="M584 277h5v5h-5zM424 417h5v5h-5zM469 417h5v5h-5zM444 422h5v5h-5z"/><path fill="#7e7b78" d="M554 282h5v5h-5zM424 287h5v5h-5z"/><path fill="#6d6b69" d="M574 282h5v5h-5zM564 317h5v5h-5zM514 372h5v5h-5zM419 412h5v5h-5z"/><path fill="#6a6866" d="M579 282h5v5h-5zM574 297h5v5h-5zM554 342h5v5h-5zM544 352h5v5h-5zM514 377h5v5h-5zM504 392h5v5h-5zM479 412h5v5h-5z"/><path fill="#676663" d="M584 282h5v5h-5zM579 292h5v5h-5zM419 417h5v5h-5z"/><path fill="#767472" d="M384 287h5v5h-5zM409 297h5v5h-5zM399 342h5v5h-5zM414 402h5v5h-5zM424 407h5v5h-5z"/><path fill="#959390" d="M494 287h5v5h-5z"/><path fill="#706e6b" d="M569 287h5v5h-5zM564 307h5v5h-5zM404 322h5v5h-5zM559 322h5v5h-5zM509 377h5v5h-5zM499 392h5v5h-5zM424 412h5v5h-5zM454 417h5v5h-5z"/><path fill="#696765" d="M579 287h5v5h-5zM574 302h5v5h-5zM559 337h5v5h-5zM509 387h5v5h-5zM489 407h5v5h-5zM439 422h5v5h-5z"/><path fill="#6b6967" d="M574 292h5v5h-5zM499 397h5v5h-5z"/><path fill="#777472" d="M404 297h5v5h-5z"/><path fill="#7a7775" d="M554 297h5v5h-5zM494 387h5v5h-5zM484 397h5v5h-5z"/><path fill="#6e6c69" d="M569 297h5v5h-5zM539 352h5v5h-5zM409 407h5v5h-5z"/><path fill="#666562" d="M579 297h5v5h-5zM534 362h5v5h-5z"/><path fill="#6d6b68" d="M569 302h5v5h-5zM484 407h5v5h-5z"/><path fill="#73726f" d="M394 307h5v5h-5zM424 317h5v5h-5z"/><path fill="#787573" d="M554 307h5v5h-5zM549 327h5v5h-5z"/><path fill="#71706d" d="M399 312h5v5h-5zM414 327h5v5h-5z"/><path fill="#7f7c7a" d="M434 312h5v5h-5z"/><path fill="#6e6d6a" d="M564 312h5v5h-5z"/><path fill="#6e6c6a" d="M409 317h5v5h-5zM559 327h5v5h-5zM504 387h5v5h-5zM459 417h5v5h-5z"/><path fill="#6d6c69" d="M414 317h5v5h-5zM554 337h5v5h-5zM474 412h5v5h-5z"/><path fill="#706f6c" d="M419 322h5v5h-5zM554 332h5v5h-5z"/><path fill="#6c6a67" d="M559 332h5v5h-5zM534 357h5v5h-5zM519 367h5v5h-5z"/><path fill="#7e7b79" d="M529 342h5v5h-5z"/><path fill="#656461" d="M559 342h5v5h-5z"/><path fill="#6b6966" d="M549 347h5v5h-5zM494 402h5v5h-5zM414 412h5v5h-5z"/><path fill="#666462" d="M554 347h5v5h-5zM549 352h5v5h-5zM504 397h5v5h-5zM499 402h5v5h-5zM429 422h5v5h-5z"/><path fill="#807d7b" d="M409 352h5v5h-5z"/><path fill="#62605e" d="M554 352h5v5h-5zM549 357h5v5h-5zM534 367h5v5h-5zM519 382h5v5h-5zM419 422h5v5h-5zM439 427h5v5h-5zM449 427h5v5h-5z"/><path fill="#7b7977" d="M399 357h5v5h-5z"/><path fill="#686764" d="M539 357h5v5h-5zM409 412h5v5h-5zM454 422h5v5h-5z"/><path fill="#656361" d="M544 357h5v5h-5zM529 367h5v5h-5zM519 377h5v5h-5zM509 392h5v5h-5zM494 407h5v5h-5zM414 417h5v5h-5zM464 422h5v5h-5z"/><path fill="#605e5c" d="M554 357h5v5h-5zM549 362h5v5h-5zM554 362h5v5h-5zM539 367h5v5h-5zM544 367h5v5h-5zM549 367h5v5h-5zM534 372h5v5h-5zM539 372h5v5h-5zM544 372h5v5h-5zM529 377h5v5h-5zM534 377h5v5h-5zM524 382h5v5h-5zM529 382h5v5h-5zM519 387h5v5h-5zM524 387h5v5h-5zM514 392h5v5h-5zM519 392h5v5h-5zM494 412h5v5h-5zM489 417h5v5h-5zM414 422h5v5h-5zM479 422h5v5h-5zM414 427h5v5h-5zM419 427h5v5h-5zM424 427h5v5h-5zM429 427h5v5h-5zM459 427h5v5h-5zM464 427h5v5h-5zM469 427h5v5h-5z"/><path fill="#6c6b68" d="M524 362h5v5h-5z"/><path fill="#696865" d="M529 362h5v5h-5zM449 422h5v5h-5z"/><path fill="#63625f" d="M539 362h5v5h-5zM514 387h5v5h-5z"/><path fill="#605f5c" d="M544 362h5v5h-5zM474 422h5v5h-5z"/><path fill="#686664" d="M524 367h5v5h-5zM519 372h5v5h-5z"/><path fill="#646260" d="M524 372h5v5h-5zM479 417h5v5h-5zM424 422h5v5h-5z"/><path fill="#605f5d" d="M529 372h5v5h-5zM524 377h5v5h-5zM484 417h5v5h-5z"/><path fill="#676563" d="M514 382h5v5h-5zM474 417h5v5h-5zM459 422h5v5h-5z"/><path fill="#615f5d" d="M509 397h5v5h-5zM499 407h5v5h-5zM434 427h5v5h-5z"/><path fill="#61605d" d="M504 402h5v5h-5zM454 427h5v5h-5z"/><path fill="#676562" d="M484 412h5v5h-5z"/><path fill="#63615f" d="M489 412h5v5h-5zM409 417h5v5h-5zM469 422h5v5h-5z"/><path fill="#686663" d="M434 422h5v5h-5z"/><path fill="#62615e" d="M444 427h5v5h-5z"/></g>
<linearGradient id="eyeg" gradientUnits="userSpaceOnUse" x1="500" y1="179" x2="515" y2="198"><stop offset="0" stop-color="#979490"/><stop offset="1" stop-color="#82807c"/></linearGradient>
<clipPath id="noseL"><path d="M360,150 L434,150 L434,178 Q425,188 422.7,206 L414.2,255 L409.3,280.3 L432.4,288 L455,296 L455,350 L360,350 Z"/></clipPath>
<clipPath id="sockB"><polygon points="370,196.5 385,196.5 421,206.5 423,260 370,260"/></clipPath>
<clipPath id="mthA"><polygon points="400,290 480,290 480,328 474.7,328 411,326.8 400,326.8"/></clipPath>
<clipPath id="lipB"><polygon points="400,326.8 411,326.8 474.7,328 480,328 480,345 400,345"/></clipPath>
<clipPath id="eyeA"><polygon points="470,150 560,150 560,189.1 544.4,189.1 528.6,195.7 479,201.7 470,205"/></clipPath>
<clipPath id="eyeB"><polygon points="470,205 479,201.7 528.6,195.7 544.4,189.1 560,189.1 560,230 470,230"/></clipPath>
<g clip-path="url(#eyeA)"><polygon points="479,201.7 491.7,179.2 520.7,179.2 544.4,189.1 528.6,195.7" fill="url(#eyeg)" filter="url(#bl1)"/><polygon points="479,201.7 491.7,179.2 497,199" fill="#999692" filter="url(#bl1)"/></g>
<g clip-path="url(#eyeB)"><polygon points="479,201.7 528.6,195.7 544.4,189.1 532,200 481,212.2" fill="#b3b0ac" filter="url(#bl1)"/></g>
<g clip-path="url(#noseL)"><path d="M434,178 Q425,188 422.7,206 L414.2,255 L409.3,280.3 L432.4,288 L444,293" fill="none" stroke="#6f6d6b" stroke-width="6" filter="url(#bl2)"/></g>
<g clip-path="url(#sockB)"><polyline points="383,196.5 421,206.5" fill="none" stroke="#6f6e6c" stroke-width="6" filter="url(#bl2)"/></g>
<g clip-path="url(#mthA)"><polyline points="405,326.8 474.7,328" fill="none" stroke="#6d6b69" stroke-width="10" filter="url(#bl2)"/></g>
<g clip-path="url(#lipB)"><polygon points="411,326.8 474.7,328 455,336.3 415.4,335.2" fill="#a4a19d" filter="url(#bl1)"/></g>
<g filter="url(#bl1)">
<polyline points="409,345 410,391 418,424" fill="none" stroke="#777675" stroke-width="1.4"/>
</g>
<polyline points="368,228 373.2,249.8 382,278.4 388.6,304.7 391.9,320 399.8,346.4 406.4,383.3 407.7,391 418.3,424.2" fill="none" stroke="#6a6967" stroke-width="6" filter="url(#bl2)"/>

</g>
<g stroke="#35373b" stroke-width="1" fill="none">
<path d="M570 121H576.7M574 118V127"/>
<path d="M580.7 140H584.6"/>
<path d="M586 159H591.2"/>
<path d="M589 180H597.8"/>
<path d="M591 201H600.3"/>
<path d="M590 222.5H601.5"/>
<path d="M582.4 244.7H596.3"/>
<path d="M574.7 267.9H587"/>
<path d="M567.6 290H580.9M578.7 255.5V291"/>
<path d="M599.6 192V226"/>
<path d="M560.8 312.6H564.5"/>
</g>

</g>
</svg>
<div class="a" style="left:152px;top:84.3px;width:19px;height:74.5px;background:#16130e;border:1px solid #3b3122;border-left:none;border-radius:0 7px 7px 0"></div>
<svg class="a" style="left:157.5px;top:103px" width="8" height="8" viewBox="0 0 8 8"><path d="M0.2 3.8 L7.2 0.2 V7.4 Z" fill="#c6ad7c"/></svg>
<div class="a" style="left:156px;top:114px;writing-mode:vertical-rl;font-size:7.4px;letter-spacing:0.6px;color:#b39a6a;line-height:10px">БЛОКИ</div>
<div class="a" style="left:972px;top:85.2px;width:20px;height:72.5px;background:#15130e;border:1px solid #3b3122;border-right:none;border-radius:7px 0 0 7px"></div>
<svg class="a" style="left:977.5px;top:96px" width="8" height="8" viewBox="0 0 8 8"><path d="M0.2 0.4 H7.4 L3.8 7.4 Z" fill="#c6ad7c"/></svg>
<div class="a" style="left:976.5px;top:106px;writing-mode:vertical-rl;font-size:7px;font-weight:bold;letter-spacing:0.4px;color:#a38b62;line-height:10px">СВОЙСТВА</div>

<div class="a" id="status"></div>
<div class="a" style="left:0;top:434px;width:103px;height:5px;border-radius:3px;background:#5a4a32"></div>
<div class="a" style="left:5px;top:446.2px;width:4.4px;height:4.4px;border-radius:50%;background:#3d8d5c"></div>
<div class="a" style="left:17.5px;top:444px;font-size:7.6px;color:#5a4d36">Верш: <span style="color:#b6a684">272</span></div>
<div class="a" style="left:60.8px;top:444px;font-size:7.6px;color:#5a4d36">Трис: <span style="color:#b6a684">500</span></div>
<div class="a" style="left:101.8px;top:444px;font-size:7.6px;color:#5a4d36">Меши: <span style="color:#b6a684">1</span></div>
<div class="a" style="left:139.6px;top:444px;font-size:7.6px;color:#5a4d36">Текс: <span style="color:#4a9a8a">1</span></div>
<div class="a" style="left:170.5px;top:444px;font-size:7.6px;color:#7a6848">1</div>
<svg class="a" style="left:176.5px;top:444px" width="8" height="9" viewBox="0 0 8 9"><path d="M2.6 0.8 Q3.6 0.6 3.6 1.6 V4 H6 Q7.4 4 7.4 5.4 V6.4 Q7.4 8.6 5.2 8.6 H3 Q1 8.6 1 6.6 V4.8 Q1 4 1.8 4 V1.6 Q1.8 0.9 2.6 0.8 Z" fill="#f2b43c"/></svg>
<div class="a" style="left:187.3px;top:444px;font-size:7.6px;color:#7a6848">вращ · 2</div>
<svg class="a" style="left:218.5px;top:444px" width="8" height="9" viewBox="0 0 8 9"><path d="M2.6 0.8 Q3.6 0.6 3.6 1.6 V4 H6 Q7.4 4 7.4 5.4 V6.4 Q7.4 8.6 5.2 8.6 H3 Q1 8.6 1 6.6 V4.8 Q1 4 1.8 4 V1.6 Q1.8 0.9 2.6 0.8 Z" fill="#f2b43c"/></svg>
<div class="a" style="left:229.8px;top:444px;font-size:7.6px;color:#7a6848">перем · Scroll/Pinch: масшт</div>
<div class="a" style="left:930.8px;top:444px;font-size:7.6px;color:#7a6848">b_deg_head.nif</div>
</body></html>
